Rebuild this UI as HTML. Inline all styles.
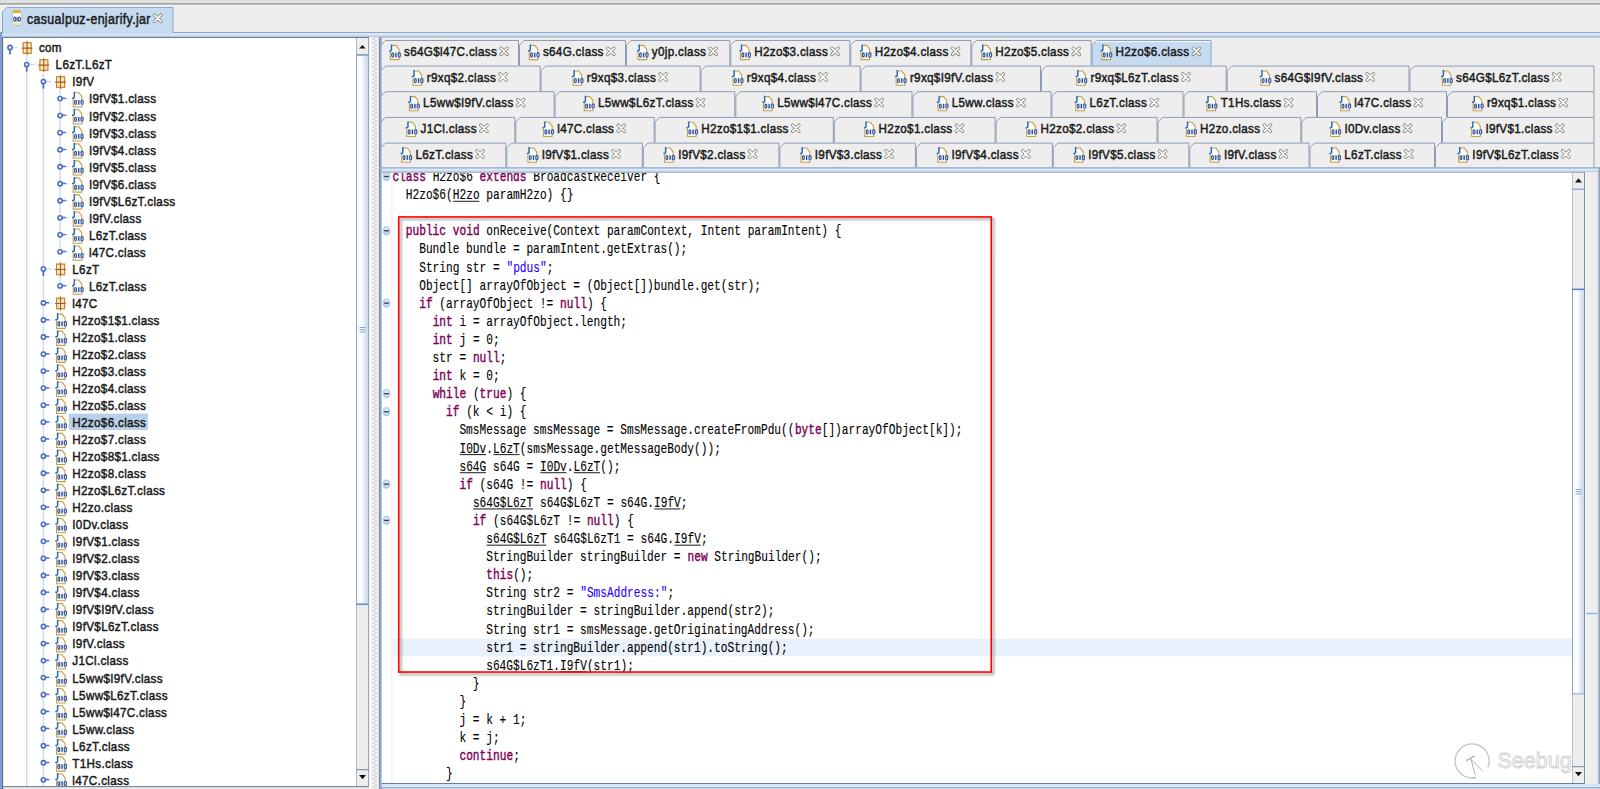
<!DOCTYPE html>
<html><head><meta charset="utf-8"><style>
html,body{margin:0;padding:0;width:1600px;height:789px;overflow:hidden;background:#eeeeee;}
svg{display:block;}

</style></head><body>
<svg width="1600" height="789" viewBox="0 0 1600 789" shape-rendering="geometricPrecision">
<rect x="0" y="0" width="1600" height="789" fill="#eeeeee"/>
<rect x="0" y="0" width="1600" height="1" fill="#dadada"/>
<rect x="0" y="1" width="1600" height="1.8" fill="#e6e6e6"/>
<rect x="0" y="2.8" width="1600" height="2" fill="#aaaaaa"/>
<rect x="0" y="5.1" width="1600" height="1" fill="#f3f3f3"/>
<rect x="0" y="32" width="1600" height="1.2" fill="#8ba5d2"/>
<defs><linearGradient id="bandg" x1="0" x2="0" y1="0" y2="1"><stop offset="0" stop-color="#e6ecf6"/><stop offset="0.55" stop-color="#d0e2f6"/><stop offset="1" stop-color="#b0c0d2"/></linearGradient></defs>
<rect x="0" y="33" width="1600" height="4" fill="url(#bandg)"/>
<path d="M2.5,33 V12 L7,7.5 H173 V33 Z" fill="#c6daf0" stroke="#8ba5d2" stroke-width="1"/>
<rect x="3" y="31" width="170" height="3" fill="#c6daf0"/>
<rect x="12.2" y="12.6" width="9.6" height="13" rx="2.2" fill="#f6f8fc" stroke="#9fb4d4" stroke-width="0.8"/>
<rect x="12.8" y="22.4" width="8.4" height="2.6" fill="#f1e4b4"/>
<rect x="12.6" y="10.1" width="8.2" height="2.8" rx="1" fill="#e2b436"/>
<ellipse cx="14.8" cy="19.2" rx="1.1" ry="2.2" fill="none" stroke="#2f4a80" stroke-width="1.1"/>
<rect x="16.5" y="17" width="1" height="4.4" fill="#2f4a80"/>
<ellipse cx="19.3" cy="19.2" rx="1.1" ry="2.2" fill="none" stroke="#2f4a80" stroke-width="1.1"/>
<text transform="translate(27,23.6) scale(0.86,1)" font-family="Liberation Sans" font-size="14.4" fill="#1a1a1a" stroke="#1a1a1a" stroke-width="0.5" letter-spacing="0.42">casualpuz-enjarify.jar</text>
<path d="M154.6,15.1 L160.9,21.4 M160.9,15.1 L154.6,21.4" stroke="#858578" stroke-width="3.3" stroke-linecap="round"/><path d="M154.6,15.1 L160.9,21.4 M160.9,15.1 L154.6,21.4" stroke="#ffffff" stroke-width="1.7" stroke-linecap="round"/>
<rect x="0" y="32" width="2" height="757" fill="#7f9fd2"/>
<rect x="2" y="37" width="1.3" height="752" fill="#5f6f80"/>
<rect x="3.3" y="37" width="365.7" height="1.3" fill="#6f7f90"/>
<rect x="3.3" y="38" width="352.7" height="748" fill="#ffffff"/>
<rect x="3.3" y="786" width="365.7" height="1.2" fill="#7a8898"/>
<g clip-path="url(#treeclip)">
<rect x="25.95" y="55.7" width="1.5" height="733.3" fill="#cfdcef"/>
<rect x="42.65" y="72.73" width="1.5" height="716.27" fill="#cfdcef"/>
<rect x="59.349999999999994" y="89.76" width="1.5" height="161.8" fill="#cfdcef"/>
<rect x="59.349999999999994" y="277.09000000000003" width="1.5" height="8.529999999999973" fill="#cfdcef"/>
<rect x="12.5" y="46.75" width="5.5" height="1.5" fill="#cfdcef"/>
<circle cx="10.0" cy="47.5" r="2.1" fill="#ffffff" stroke="#4a6cc4" stroke-width="1.6"/>
<rect x="9.15" y="49.5" width="1.7" height="5" fill="#4a6cc4"/>
<rect x="23.200000000000003" y="42.7" width="8" height="10.6" fill="#f3dca4" stroke="#d0822a" stroke-width="1.2"/><rect x="24.200000000000003" y="43.7" width="2.6" height="3.6" fill="#f8ecc4"/><rect x="27.6" y="43.7" width="2.6" height="3.6" fill="#f8ecc4"/><rect x="24.200000000000003" y="48.7" width="2.6" height="3.6" fill="#f8ecc4"/><rect x="27.6" y="48.7" width="2.6" height="3.6" fill="#f8ecc4"/><path d="M27.1,41.1 V55.0 M21.700000000000003,48.1 H32.5" stroke="#a85a26" stroke-width="1.1"/>
<text transform="translate(38.90,52.40) scale(0.86,1)" font-family="Liberation Sans" font-size="13.6" fill="#1a1a1a" stroke="#1a1a1a" stroke-width="0.5" letter-spacing="0.36">com</text>
<rect x="29.2" y="63.78" width="5.5" height="1.5" fill="#cfdcef"/>
<circle cx="26.7" cy="64.53" r="2.1" fill="#ffffff" stroke="#4a6cc4" stroke-width="1.6"/>
<rect x="25.849999999999998" y="66.53" width="1.7" height="5" fill="#4a6cc4"/>
<rect x="39.9" y="59.730000000000004" width="8" height="10.6" fill="#f3dca4" stroke="#d0822a" stroke-width="1.2"/><rect x="40.9" y="60.730000000000004" width="2.6" height="3.6" fill="#f8ecc4"/><rect x="44.3" y="60.730000000000004" width="2.6" height="3.6" fill="#f8ecc4"/><rect x="40.9" y="65.73" width="2.6" height="3.6" fill="#f8ecc4"/><rect x="44.3" y="65.73" width="2.6" height="3.6" fill="#f8ecc4"/><path d="M43.8,58.13 V72.03 M38.4,65.13 H49.199999999999996" stroke="#a85a26" stroke-width="1.1"/>
<text transform="translate(55.60,69.43) scale(0.86,1)" font-family="Liberation Sans" font-size="13.6" fill="#1a1a1a" stroke="#1a1a1a" stroke-width="0.5" letter-spacing="0.36">L6zT.L6zT</text>
<rect x="45.9" y="80.81" width="5.5" height="1.5" fill="#cfdcef"/>
<circle cx="43.4" cy="81.56" r="2.1" fill="#ffffff" stroke="#4a6cc4" stroke-width="1.6"/>
<rect x="42.55" y="83.56" width="1.7" height="5" fill="#4a6cc4"/>
<rect x="56.6" y="76.76" width="8" height="10.6" fill="#f3dca4" stroke="#d0822a" stroke-width="1.2"/><rect x="57.6" y="77.76" width="2.6" height="3.6" fill="#f8ecc4"/><rect x="61.0" y="77.76" width="2.6" height="3.6" fill="#f8ecc4"/><rect x="57.6" y="82.76" width="2.6" height="3.6" fill="#f8ecc4"/><rect x="61.0" y="82.76" width="2.6" height="3.6" fill="#f8ecc4"/><path d="M60.5,75.16000000000001 V89.06000000000002 M55.1,82.16000000000001 H65.9" stroke="#a85a26" stroke-width="1.1"/>
<text transform="translate(72.30,86.46) scale(0.86,1)" font-family="Liberation Sans" font-size="13.6" fill="#1a1a1a" stroke="#1a1a1a" stroke-width="0.5" letter-spacing="0.36">I9fV</text>
<rect x="62.599999999999994" y="97.84" width="5.5" height="1.5" fill="#cfdcef"/>
<circle cx="60.099999999999994" cy="98.59" r="2.1" fill="#ffffff" stroke="#4a6cc4" stroke-width="1.6"/>
<rect x="62.3" y="97.59" width="3.4" height="1.4" fill="#4a6cc4"/>
<path d="M74.39999999999999,92.74000000000001 H78.79999999999998 L81.79999999999998,96.54 V106.94000000000001 H73.19999999999999 V99.14000000000001" fill="#fbfbf8" stroke="#c4a048" stroke-width="1.1"/><rect x="73.99999999999999" y="99.54" width="9.4" height="5.8" fill="#e3e9f4"/><ellipse cx="75.49999999999999" cy="102.34" rx="0.95" ry="2.1" fill="none" stroke="#2f4f90" stroke-width="1.1"/><rect x="78.1" y="100.04" width="1.3" height="4.6" fill="#2f4f90"/><ellipse cx="82.1" cy="102.34" rx="1.1" ry="2.3" fill="none" stroke="#3a5a9a" stroke-width="1.2"/><path d="M74.29999999999998,91.84 V97.04 Q74.29999999999998,98.34 71.99999999999999,98.34" fill="none" stroke="#2a6cb4" stroke-width="1.5"/>
<text transform="translate(89.00,103.49) scale(0.86,1)" font-family="Liberation Sans" font-size="13.6" fill="#1a1a1a" stroke="#1a1a1a" stroke-width="0.5" letter-spacing="0.36">I9fV$1.class</text>
<rect x="62.599999999999994" y="114.87" width="5.5" height="1.5" fill="#cfdcef"/>
<circle cx="60.099999999999994" cy="115.62" r="2.1" fill="#ffffff" stroke="#4a6cc4" stroke-width="1.6"/>
<rect x="62.3" y="114.62" width="3.4" height="1.4" fill="#4a6cc4"/>
<path d="M74.39999999999999,109.77000000000001 H78.79999999999998 L81.79999999999998,113.57000000000001 V123.97000000000001 H73.19999999999999 V116.17000000000002" fill="#fbfbf8" stroke="#c4a048" stroke-width="1.1"/><rect x="73.99999999999999" y="116.57000000000001" width="9.4" height="5.8" fill="#e3e9f4"/><ellipse cx="75.49999999999999" cy="119.37" rx="0.95" ry="2.1" fill="none" stroke="#2f4f90" stroke-width="1.1"/><rect x="78.1" y="117.07000000000001" width="1.3" height="4.6" fill="#2f4f90"/><ellipse cx="82.1" cy="119.37" rx="1.1" ry="2.3" fill="none" stroke="#3a5a9a" stroke-width="1.2"/><path d="M74.29999999999998,108.87 V114.07000000000001 Q74.29999999999998,115.37 71.99999999999999,115.37" fill="none" stroke="#2a6cb4" stroke-width="1.5"/>
<text transform="translate(89.00,120.52) scale(0.86,1)" font-family="Liberation Sans" font-size="13.6" fill="#1a1a1a" stroke="#1a1a1a" stroke-width="0.5" letter-spacing="0.36">I9fV$2.class</text>
<rect x="62.599999999999994" y="131.90000000000003" width="5.5" height="1.5" fill="#cfdcef"/>
<circle cx="60.099999999999994" cy="132.65000000000003" r="2.1" fill="#ffffff" stroke="#4a6cc4" stroke-width="1.6"/>
<rect x="62.3" y="131.65000000000003" width="3.4" height="1.4" fill="#4a6cc4"/>
<path d="M74.39999999999999,126.80000000000003 H78.79999999999998 L81.79999999999998,130.60000000000002 V141.00000000000003 H73.19999999999999 V133.20000000000002" fill="#fbfbf8" stroke="#c4a048" stroke-width="1.1"/><rect x="73.99999999999999" y="133.60000000000002" width="9.4" height="5.8" fill="#e3e9f4"/><ellipse cx="75.49999999999999" cy="136.40000000000003" rx="0.95" ry="2.1" fill="none" stroke="#2f4f90" stroke-width="1.1"/><rect x="78.1" y="134.10000000000002" width="1.3" height="4.6" fill="#2f4f90"/><ellipse cx="82.1" cy="136.40000000000003" rx="1.1" ry="2.3" fill="none" stroke="#3a5a9a" stroke-width="1.2"/><path d="M74.29999999999998,125.90000000000002 V131.10000000000002 Q74.29999999999998,132.40000000000003 71.99999999999999,132.40000000000003" fill="none" stroke="#2a6cb4" stroke-width="1.5"/>
<text transform="translate(89.00,137.55) scale(0.86,1)" font-family="Liberation Sans" font-size="13.6" fill="#1a1a1a" stroke="#1a1a1a" stroke-width="0.5" letter-spacing="0.36">I9fV$3.class</text>
<rect x="62.599999999999994" y="148.93" width="5.5" height="1.5" fill="#cfdcef"/>
<circle cx="60.099999999999994" cy="149.68" r="2.1" fill="#ffffff" stroke="#4a6cc4" stroke-width="1.6"/>
<rect x="62.3" y="148.68" width="3.4" height="1.4" fill="#4a6cc4"/>
<path d="M74.39999999999999,143.83 H78.79999999999998 L81.79999999999998,147.63000000000002 V158.03 H73.19999999999999 V150.23000000000002" fill="#fbfbf8" stroke="#c4a048" stroke-width="1.1"/><rect x="73.99999999999999" y="150.63000000000002" width="9.4" height="5.8" fill="#e3e9f4"/><ellipse cx="75.49999999999999" cy="153.43" rx="0.95" ry="2.1" fill="none" stroke="#2f4f90" stroke-width="1.1"/><rect x="78.1" y="151.13000000000002" width="1.3" height="4.6" fill="#2f4f90"/><ellipse cx="82.1" cy="153.43" rx="1.1" ry="2.3" fill="none" stroke="#3a5a9a" stroke-width="1.2"/><path d="M74.29999999999998,142.93 V148.13000000000002 Q74.29999999999998,149.43 71.99999999999999,149.43" fill="none" stroke="#2a6cb4" stroke-width="1.5"/>
<text transform="translate(89.00,154.58) scale(0.86,1)" font-family="Liberation Sans" font-size="13.6" fill="#1a1a1a" stroke="#1a1a1a" stroke-width="0.5" letter-spacing="0.36">I9fV$4.class</text>
<rect x="62.599999999999994" y="165.96000000000004" width="5.5" height="1.5" fill="#cfdcef"/>
<circle cx="60.099999999999994" cy="166.71000000000004" r="2.1" fill="#ffffff" stroke="#4a6cc4" stroke-width="1.6"/>
<rect x="62.3" y="165.71000000000004" width="3.4" height="1.4" fill="#4a6cc4"/>
<path d="M74.39999999999999,160.86000000000004 H78.79999999999998 L81.79999999999998,164.66000000000005 V175.06000000000003 H73.19999999999999 V167.26000000000005" fill="#fbfbf8" stroke="#c4a048" stroke-width="1.1"/><rect x="73.99999999999999" y="167.66000000000005" width="9.4" height="5.8" fill="#e3e9f4"/><ellipse cx="75.49999999999999" cy="170.46000000000004" rx="0.95" ry="2.1" fill="none" stroke="#2f4f90" stroke-width="1.1"/><rect x="78.1" y="168.16000000000005" width="1.3" height="4.6" fill="#2f4f90"/><ellipse cx="82.1" cy="170.46000000000004" rx="1.1" ry="2.3" fill="none" stroke="#3a5a9a" stroke-width="1.2"/><path d="M74.29999999999998,159.96000000000004 V165.16000000000005 Q74.29999999999998,166.46000000000004 71.99999999999999,166.46000000000004" fill="none" stroke="#2a6cb4" stroke-width="1.5"/>
<text transform="translate(89.00,171.61) scale(0.86,1)" font-family="Liberation Sans" font-size="13.6" fill="#1a1a1a" stroke="#1a1a1a" stroke-width="0.5" letter-spacing="0.36">I9fV$5.class</text>
<rect x="62.599999999999994" y="182.99" width="5.5" height="1.5" fill="#cfdcef"/>
<circle cx="60.099999999999994" cy="183.74" r="2.1" fill="#ffffff" stroke="#4a6cc4" stroke-width="1.6"/>
<rect x="62.3" y="182.74" width="3.4" height="1.4" fill="#4a6cc4"/>
<path d="M74.39999999999999,177.89000000000001 H78.79999999999998 L81.79999999999998,181.69000000000003 V192.09 H73.19999999999999 V184.29000000000002" fill="#fbfbf8" stroke="#c4a048" stroke-width="1.1"/><rect x="73.99999999999999" y="184.69000000000003" width="9.4" height="5.8" fill="#e3e9f4"/><ellipse cx="75.49999999999999" cy="187.49" rx="0.95" ry="2.1" fill="none" stroke="#2f4f90" stroke-width="1.1"/><rect x="78.1" y="185.19000000000003" width="1.3" height="4.6" fill="#2f4f90"/><ellipse cx="82.1" cy="187.49" rx="1.1" ry="2.3" fill="none" stroke="#3a5a9a" stroke-width="1.2"/><path d="M74.29999999999998,176.99 V182.19000000000003 Q74.29999999999998,183.49 71.99999999999999,183.49" fill="none" stroke="#2a6cb4" stroke-width="1.5"/>
<text transform="translate(89.00,188.64) scale(0.86,1)" font-family="Liberation Sans" font-size="13.6" fill="#1a1a1a" stroke="#1a1a1a" stroke-width="0.5" letter-spacing="0.36">I9fV$6.class</text>
<rect x="62.599999999999994" y="200.02000000000004" width="5.5" height="1.5" fill="#cfdcef"/>
<circle cx="60.099999999999994" cy="200.77000000000004" r="2.1" fill="#ffffff" stroke="#4a6cc4" stroke-width="1.6"/>
<rect x="62.3" y="199.77000000000004" width="3.4" height="1.4" fill="#4a6cc4"/>
<path d="M74.39999999999999,194.92000000000004 H78.79999999999998 L81.79999999999998,198.72000000000006 V209.12000000000003 H73.19999999999999 V201.32000000000005" fill="#fbfbf8" stroke="#c4a048" stroke-width="1.1"/><rect x="73.99999999999999" y="201.72000000000006" width="9.4" height="5.8" fill="#e3e9f4"/><ellipse cx="75.49999999999999" cy="204.52000000000004" rx="0.95" ry="2.1" fill="none" stroke="#2f4f90" stroke-width="1.1"/><rect x="78.1" y="202.22000000000006" width="1.3" height="4.6" fill="#2f4f90"/><ellipse cx="82.1" cy="204.52000000000004" rx="1.1" ry="2.3" fill="none" stroke="#3a5a9a" stroke-width="1.2"/><path d="M74.29999999999998,194.02000000000004 V199.22000000000006 Q74.29999999999998,200.52000000000004 71.99999999999999,200.52000000000004" fill="none" stroke="#2a6cb4" stroke-width="1.5"/>
<text transform="translate(89.00,205.67) scale(0.86,1)" font-family="Liberation Sans" font-size="13.6" fill="#1a1a1a" stroke="#1a1a1a" stroke-width="0.5" letter-spacing="0.36">I9fV$L6zT.class</text>
<rect x="62.599999999999994" y="217.05" width="5.5" height="1.5" fill="#cfdcef"/>
<circle cx="60.099999999999994" cy="217.8" r="2.1" fill="#ffffff" stroke="#4a6cc4" stroke-width="1.6"/>
<rect x="62.3" y="216.8" width="3.4" height="1.4" fill="#4a6cc4"/>
<path d="M74.39999999999999,211.95000000000002 H78.79999999999998 L81.79999999999998,215.75000000000003 V226.15 H73.19999999999999 V218.35000000000002" fill="#fbfbf8" stroke="#c4a048" stroke-width="1.1"/><rect x="73.99999999999999" y="218.75000000000003" width="9.4" height="5.8" fill="#e3e9f4"/><ellipse cx="75.49999999999999" cy="221.55" rx="0.95" ry="2.1" fill="none" stroke="#2f4f90" stroke-width="1.1"/><rect x="78.1" y="219.25000000000003" width="1.3" height="4.6" fill="#2f4f90"/><ellipse cx="82.1" cy="221.55" rx="1.1" ry="2.3" fill="none" stroke="#3a5a9a" stroke-width="1.2"/><path d="M74.29999999999998,211.05 V216.25000000000003 Q74.29999999999998,217.55 71.99999999999999,217.55" fill="none" stroke="#2a6cb4" stroke-width="1.5"/>
<text transform="translate(89.00,222.70) scale(0.86,1)" font-family="Liberation Sans" font-size="13.6" fill="#1a1a1a" stroke="#1a1a1a" stroke-width="0.5" letter-spacing="0.36">I9fV.class</text>
<rect x="62.599999999999994" y="234.08000000000004" width="5.5" height="1.5" fill="#cfdcef"/>
<circle cx="60.099999999999994" cy="234.83000000000004" r="2.1" fill="#ffffff" stroke="#4a6cc4" stroke-width="1.6"/>
<rect x="62.3" y="233.83000000000004" width="3.4" height="1.4" fill="#4a6cc4"/>
<path d="M74.39999999999999,228.98000000000005 H78.79999999999998 L81.79999999999998,232.78000000000006 V243.18000000000004 H73.19999999999999 V235.38000000000005" fill="#fbfbf8" stroke="#c4a048" stroke-width="1.1"/><rect x="73.99999999999999" y="235.78000000000006" width="9.4" height="5.8" fill="#e3e9f4"/><ellipse cx="75.49999999999999" cy="238.58000000000004" rx="0.95" ry="2.1" fill="none" stroke="#2f4f90" stroke-width="1.1"/><rect x="78.1" y="236.28000000000006" width="1.3" height="4.6" fill="#2f4f90"/><ellipse cx="82.1" cy="238.58000000000004" rx="1.1" ry="2.3" fill="none" stroke="#3a5a9a" stroke-width="1.2"/><path d="M74.29999999999998,228.08000000000004 V233.28000000000006 Q74.29999999999998,234.58000000000004 71.99999999999999,234.58000000000004" fill="none" stroke="#2a6cb4" stroke-width="1.5"/>
<text transform="translate(89.00,239.73) scale(0.86,1)" font-family="Liberation Sans" font-size="13.6" fill="#1a1a1a" stroke="#1a1a1a" stroke-width="0.5" letter-spacing="0.36">L6zT.class</text>
<rect x="62.599999999999994" y="251.11" width="5.5" height="1.5" fill="#cfdcef"/>
<circle cx="60.099999999999994" cy="251.86" r="2.1" fill="#ffffff" stroke="#4a6cc4" stroke-width="1.6"/>
<rect x="62.3" y="250.86" width="3.4" height="1.4" fill="#4a6cc4"/>
<path d="M74.39999999999999,246.01000000000002 H78.79999999999998 L81.79999999999998,249.81000000000003 V260.21000000000004 H73.19999999999999 V252.41000000000003" fill="#fbfbf8" stroke="#c4a048" stroke-width="1.1"/><rect x="73.99999999999999" y="252.81000000000003" width="9.4" height="5.8" fill="#e3e9f4"/><ellipse cx="75.49999999999999" cy="255.61" rx="0.95" ry="2.1" fill="none" stroke="#2f4f90" stroke-width="1.1"/><rect x="78.1" y="253.31000000000003" width="1.3" height="4.6" fill="#2f4f90"/><ellipse cx="82.1" cy="255.61" rx="1.1" ry="2.3" fill="none" stroke="#3a5a9a" stroke-width="1.2"/><path d="M74.29999999999998,245.11 V250.31000000000003 Q74.29999999999998,251.61 71.99999999999999,251.61" fill="none" stroke="#2a6cb4" stroke-width="1.5"/>
<text transform="translate(89.00,256.76) scale(0.86,1)" font-family="Liberation Sans" font-size="13.6" fill="#1a1a1a" stroke="#1a1a1a" stroke-width="0.5" letter-spacing="0.36">l47C.class</text>
<rect x="45.9" y="268.14000000000004" width="5.5" height="1.5" fill="#cfdcef"/>
<circle cx="43.4" cy="268.89000000000004" r="2.1" fill="#ffffff" stroke="#4a6cc4" stroke-width="1.6"/>
<rect x="42.55" y="270.89000000000004" width="1.7" height="5" fill="#4a6cc4"/>
<rect x="56.6" y="264.09000000000003" width="8" height="10.6" fill="#f3dca4" stroke="#d0822a" stroke-width="1.2"/><rect x="57.6" y="265.09000000000003" width="2.6" height="3.6" fill="#f8ecc4"/><rect x="61.0" y="265.09000000000003" width="2.6" height="3.6" fill="#f8ecc4"/><rect x="57.6" y="270.09000000000003" width="2.6" height="3.6" fill="#f8ecc4"/><rect x="61.0" y="270.09000000000003" width="2.6" height="3.6" fill="#f8ecc4"/><path d="M60.5,262.49 V276.39 M55.1,269.49 H65.9" stroke="#a85a26" stroke-width="1.1"/>
<text transform="translate(72.30,273.79) scale(0.86,1)" font-family="Liberation Sans" font-size="13.6" fill="#1a1a1a" stroke="#1a1a1a" stroke-width="0.5" letter-spacing="0.36">L6zT</text>
<rect x="62.599999999999994" y="285.17" width="5.5" height="1.5" fill="#cfdcef"/>
<circle cx="60.099999999999994" cy="285.92" r="2.1" fill="#ffffff" stroke="#4a6cc4" stroke-width="1.6"/>
<rect x="62.3" y="284.92" width="3.4" height="1.4" fill="#4a6cc4"/>
<path d="M74.39999999999999,280.07 H78.79999999999998 L81.79999999999998,283.87 V294.27 H73.19999999999999 V286.46999999999997" fill="#fbfbf8" stroke="#c4a048" stroke-width="1.1"/><rect x="73.99999999999999" y="286.87" width="9.4" height="5.8" fill="#e3e9f4"/><ellipse cx="75.49999999999999" cy="289.67" rx="0.95" ry="2.1" fill="none" stroke="#2f4f90" stroke-width="1.1"/><rect x="78.1" y="287.37" width="1.3" height="4.6" fill="#2f4f90"/><ellipse cx="82.1" cy="289.67" rx="1.1" ry="2.3" fill="none" stroke="#3a5a9a" stroke-width="1.2"/><path d="M74.29999999999998,279.17 V284.37 Q74.29999999999998,285.67 71.99999999999999,285.67" fill="none" stroke="#2a6cb4" stroke-width="1.5"/>
<text transform="translate(89.00,290.82) scale(0.86,1)" font-family="Liberation Sans" font-size="13.6" fill="#1a1a1a" stroke="#1a1a1a" stroke-width="0.5" letter-spacing="0.36">L6zT.class</text>
<rect x="45.9" y="302.20000000000005" width="5.5" height="1.5" fill="#cfdcef"/>
<circle cx="43.4" cy="302.95000000000005" r="2.1" fill="#ffffff" stroke="#4a6cc4" stroke-width="1.6"/>
<rect x="45.6" y="301.95000000000005" width="3.4" height="1.4" fill="#4a6cc4"/>
<rect x="56.6" y="298.15000000000003" width="8" height="10.6" fill="#f3dca4" stroke="#d0822a" stroke-width="1.2"/><rect x="57.6" y="299.15000000000003" width="2.6" height="3.6" fill="#f8ecc4"/><rect x="61.0" y="299.15000000000003" width="2.6" height="3.6" fill="#f8ecc4"/><rect x="57.6" y="304.15000000000003" width="2.6" height="3.6" fill="#f8ecc4"/><rect x="61.0" y="304.15000000000003" width="2.6" height="3.6" fill="#f8ecc4"/><path d="M60.5,296.55 V310.45 M55.1,303.55 H65.9" stroke="#a85a26" stroke-width="1.1"/>
<text transform="translate(72.30,307.85) scale(0.86,1)" font-family="Liberation Sans" font-size="13.6" fill="#1a1a1a" stroke="#1a1a1a" stroke-width="0.5" letter-spacing="0.36">l47C</text>
<rect x="45.9" y="319.23" width="5.5" height="1.5" fill="#cfdcef"/>
<circle cx="43.4" cy="319.98" r="2.1" fill="#ffffff" stroke="#4a6cc4" stroke-width="1.6"/>
<rect x="45.6" y="318.98" width="3.4" height="1.4" fill="#4a6cc4"/>
<path d="M57.7,314.13 H62.1 L65.1,317.93 V328.33 H56.5 V320.53" fill="#fbfbf8" stroke="#c4a048" stroke-width="1.1"/><rect x="57.3" y="320.93" width="9.4" height="5.8" fill="#e3e9f4"/><ellipse cx="58.8" cy="323.73" rx="0.95" ry="2.1" fill="none" stroke="#2f4f90" stroke-width="1.1"/><rect x="61.4" y="321.43" width="1.3" height="4.6" fill="#2f4f90"/><ellipse cx="65.4" cy="323.73" rx="1.1" ry="2.3" fill="none" stroke="#3a5a9a" stroke-width="1.2"/><path d="M57.6,313.23 V318.43 Q57.6,319.73 55.3,319.73" fill="none" stroke="#2a6cb4" stroke-width="1.5"/>
<text transform="translate(72.30,324.88) scale(0.86,1)" font-family="Liberation Sans" font-size="13.6" fill="#1a1a1a" stroke="#1a1a1a" stroke-width="0.5" letter-spacing="0.36">H2zo$1$1.class</text>
<rect x="45.9" y="336.26" width="5.5" height="1.5" fill="#cfdcef"/>
<circle cx="43.4" cy="337.01" r="2.1" fill="#ffffff" stroke="#4a6cc4" stroke-width="1.6"/>
<rect x="45.6" y="336.01" width="3.4" height="1.4" fill="#4a6cc4"/>
<path d="M57.7,331.15999999999997 H62.1 L65.1,334.96 V345.35999999999996 H56.5 V337.55999999999995" fill="#fbfbf8" stroke="#c4a048" stroke-width="1.1"/><rect x="57.3" y="337.96" width="9.4" height="5.8" fill="#e3e9f4"/><ellipse cx="58.8" cy="340.76" rx="0.95" ry="2.1" fill="none" stroke="#2f4f90" stroke-width="1.1"/><rect x="61.4" y="338.46" width="1.3" height="4.6" fill="#2f4f90"/><ellipse cx="65.4" cy="340.76" rx="1.1" ry="2.3" fill="none" stroke="#3a5a9a" stroke-width="1.2"/><path d="M57.6,330.26 V335.46 Q57.6,336.76 55.3,336.76" fill="none" stroke="#2a6cb4" stroke-width="1.5"/>
<text transform="translate(72.30,341.91) scale(0.86,1)" font-family="Liberation Sans" font-size="13.6" fill="#1a1a1a" stroke="#1a1a1a" stroke-width="0.5" letter-spacing="0.36">H2zo$1.class</text>
<rect x="45.9" y="353.29" width="5.5" height="1.5" fill="#cfdcef"/>
<circle cx="43.4" cy="354.04" r="2.1" fill="#ffffff" stroke="#4a6cc4" stroke-width="1.6"/>
<rect x="45.6" y="353.04" width="3.4" height="1.4" fill="#4a6cc4"/>
<path d="M57.7,348.19 H62.1 L65.1,351.99 V362.39 H56.5 V354.59" fill="#fbfbf8" stroke="#c4a048" stroke-width="1.1"/><rect x="57.3" y="354.99" width="9.4" height="5.8" fill="#e3e9f4"/><ellipse cx="58.8" cy="357.79" rx="0.95" ry="2.1" fill="none" stroke="#2f4f90" stroke-width="1.1"/><rect x="61.4" y="355.49" width="1.3" height="4.6" fill="#2f4f90"/><ellipse cx="65.4" cy="357.79" rx="1.1" ry="2.3" fill="none" stroke="#3a5a9a" stroke-width="1.2"/><path d="M57.6,347.29 V352.49 Q57.6,353.79 55.3,353.79" fill="none" stroke="#2a6cb4" stroke-width="1.5"/>
<text transform="translate(72.30,358.94) scale(0.86,1)" font-family="Liberation Sans" font-size="13.6" fill="#1a1a1a" stroke="#1a1a1a" stroke-width="0.5" letter-spacing="0.36">H2zo$2.class</text>
<rect x="45.9" y="370.32000000000005" width="5.5" height="1.5" fill="#cfdcef"/>
<circle cx="43.4" cy="371.07000000000005" r="2.1" fill="#ffffff" stroke="#4a6cc4" stroke-width="1.6"/>
<rect x="45.6" y="370.07000000000005" width="3.4" height="1.4" fill="#4a6cc4"/>
<path d="M57.7,365.22 H62.1 L65.1,369.02000000000004 V379.42 H56.5 V371.62" fill="#fbfbf8" stroke="#c4a048" stroke-width="1.1"/><rect x="57.3" y="372.02000000000004" width="9.4" height="5.8" fill="#e3e9f4"/><ellipse cx="58.8" cy="374.82000000000005" rx="0.95" ry="2.1" fill="none" stroke="#2f4f90" stroke-width="1.1"/><rect x="61.4" y="372.52000000000004" width="1.3" height="4.6" fill="#2f4f90"/><ellipse cx="65.4" cy="374.82000000000005" rx="1.1" ry="2.3" fill="none" stroke="#3a5a9a" stroke-width="1.2"/><path d="M57.6,364.32000000000005 V369.52000000000004 Q57.6,370.82000000000005 55.3,370.82000000000005" fill="none" stroke="#2a6cb4" stroke-width="1.5"/>
<text transform="translate(72.30,375.97) scale(0.86,1)" font-family="Liberation Sans" font-size="13.6" fill="#1a1a1a" stroke="#1a1a1a" stroke-width="0.5" letter-spacing="0.36">H2zo$3.class</text>
<rect x="45.9" y="387.35" width="5.5" height="1.5" fill="#cfdcef"/>
<circle cx="43.4" cy="388.1" r="2.1" fill="#ffffff" stroke="#4a6cc4" stroke-width="1.6"/>
<rect x="45.6" y="387.1" width="3.4" height="1.4" fill="#4a6cc4"/>
<path d="M57.7,382.25 H62.1 L65.1,386.05 V396.45 H56.5 V388.65" fill="#fbfbf8" stroke="#c4a048" stroke-width="1.1"/><rect x="57.3" y="389.05" width="9.4" height="5.8" fill="#e3e9f4"/><ellipse cx="58.8" cy="391.85" rx="0.95" ry="2.1" fill="none" stroke="#2f4f90" stroke-width="1.1"/><rect x="61.4" y="389.55" width="1.3" height="4.6" fill="#2f4f90"/><ellipse cx="65.4" cy="391.85" rx="1.1" ry="2.3" fill="none" stroke="#3a5a9a" stroke-width="1.2"/><path d="M57.6,381.35 V386.55 Q57.6,387.85 55.3,387.85" fill="none" stroke="#2a6cb4" stroke-width="1.5"/>
<text transform="translate(72.30,393.00) scale(0.86,1)" font-family="Liberation Sans" font-size="13.6" fill="#1a1a1a" stroke="#1a1a1a" stroke-width="0.5" letter-spacing="0.36">H2zo$4.class</text>
<rect x="45.9" y="404.38" width="5.5" height="1.5" fill="#cfdcef"/>
<circle cx="43.4" cy="405.13" r="2.1" fill="#ffffff" stroke="#4a6cc4" stroke-width="1.6"/>
<rect x="45.6" y="404.13" width="3.4" height="1.4" fill="#4a6cc4"/>
<path d="M57.7,399.28 H62.1 L65.1,403.08 V413.47999999999996 H56.5 V405.67999999999995" fill="#fbfbf8" stroke="#c4a048" stroke-width="1.1"/><rect x="57.3" y="406.08" width="9.4" height="5.8" fill="#e3e9f4"/><ellipse cx="58.8" cy="408.88" rx="0.95" ry="2.1" fill="none" stroke="#2f4f90" stroke-width="1.1"/><rect x="61.4" y="406.58" width="1.3" height="4.6" fill="#2f4f90"/><ellipse cx="65.4" cy="408.88" rx="1.1" ry="2.3" fill="none" stroke="#3a5a9a" stroke-width="1.2"/><path d="M57.6,398.38 V403.58 Q57.6,404.88 55.3,404.88" fill="none" stroke="#2a6cb4" stroke-width="1.5"/>
<text transform="translate(72.30,410.03) scale(0.86,1)" font-family="Liberation Sans" font-size="13.6" fill="#1a1a1a" stroke="#1a1a1a" stroke-width="0.5" letter-spacing="0.36">H2zo$5.class</text>
<rect x="68.8" y="413.56" width="79.3" height="16.6" fill="#b9d0e8"/>
<rect x="45.9" y="421.41" width="5.5" height="1.5" fill="#cfdcef"/>
<circle cx="43.4" cy="422.16" r="2.1" fill="#ffffff" stroke="#4a6cc4" stroke-width="1.6"/>
<rect x="45.6" y="421.16" width="3.4" height="1.4" fill="#4a6cc4"/>
<path d="M57.7,416.31 H62.1 L65.1,420.11 V430.51 H56.5 V422.71" fill="#fbfbf8" stroke="#c4a048" stroke-width="1.1"/><rect x="57.3" y="423.11" width="9.4" height="5.8" fill="#e3e9f4"/><ellipse cx="58.8" cy="425.91" rx="0.95" ry="2.1" fill="none" stroke="#2f4f90" stroke-width="1.1"/><rect x="61.4" y="423.61" width="1.3" height="4.6" fill="#2f4f90"/><ellipse cx="65.4" cy="425.91" rx="1.1" ry="2.3" fill="none" stroke="#3a5a9a" stroke-width="1.2"/><path d="M57.6,415.41 V420.61 Q57.6,421.91 55.3,421.91" fill="none" stroke="#2a6cb4" stroke-width="1.5"/>
<text transform="translate(72.30,427.06) scale(0.86,1)" font-family="Liberation Sans" font-size="13.6" fill="#1a1a1a" stroke="#1a1a1a" stroke-width="0.5" letter-spacing="0.36">H2zo$6.class</text>
<rect x="45.9" y="438.44000000000005" width="5.5" height="1.5" fill="#cfdcef"/>
<circle cx="43.4" cy="439.19000000000005" r="2.1" fill="#ffffff" stroke="#4a6cc4" stroke-width="1.6"/>
<rect x="45.6" y="438.19000000000005" width="3.4" height="1.4" fill="#4a6cc4"/>
<path d="M57.7,433.34000000000003 H62.1 L65.1,437.14000000000004 V447.54 H56.5 V439.74" fill="#fbfbf8" stroke="#c4a048" stroke-width="1.1"/><rect x="57.3" y="440.14000000000004" width="9.4" height="5.8" fill="#e3e9f4"/><ellipse cx="58.8" cy="442.94000000000005" rx="0.95" ry="2.1" fill="none" stroke="#2f4f90" stroke-width="1.1"/><rect x="61.4" y="440.64000000000004" width="1.3" height="4.6" fill="#2f4f90"/><ellipse cx="65.4" cy="442.94000000000005" rx="1.1" ry="2.3" fill="none" stroke="#3a5a9a" stroke-width="1.2"/><path d="M57.6,432.44000000000005 V437.64000000000004 Q57.6,438.94000000000005 55.3,438.94000000000005" fill="none" stroke="#2a6cb4" stroke-width="1.5"/>
<text transform="translate(72.30,444.09) scale(0.86,1)" font-family="Liberation Sans" font-size="13.6" fill="#1a1a1a" stroke="#1a1a1a" stroke-width="0.5" letter-spacing="0.36">H2zo$7.class</text>
<rect x="45.9" y="455.47" width="5.5" height="1.5" fill="#cfdcef"/>
<circle cx="43.4" cy="456.22" r="2.1" fill="#ffffff" stroke="#4a6cc4" stroke-width="1.6"/>
<rect x="45.6" y="455.22" width="3.4" height="1.4" fill="#4a6cc4"/>
<path d="M57.7,450.37 H62.1 L65.1,454.17 V464.57 H56.5 V456.77" fill="#fbfbf8" stroke="#c4a048" stroke-width="1.1"/><rect x="57.3" y="457.17" width="9.4" height="5.8" fill="#e3e9f4"/><ellipse cx="58.8" cy="459.97" rx="0.95" ry="2.1" fill="none" stroke="#2f4f90" stroke-width="1.1"/><rect x="61.4" y="457.67" width="1.3" height="4.6" fill="#2f4f90"/><ellipse cx="65.4" cy="459.97" rx="1.1" ry="2.3" fill="none" stroke="#3a5a9a" stroke-width="1.2"/><path d="M57.6,449.47 V454.67 Q57.6,455.97 55.3,455.97" fill="none" stroke="#2a6cb4" stroke-width="1.5"/>
<text transform="translate(72.30,461.12) scale(0.86,1)" font-family="Liberation Sans" font-size="13.6" fill="#1a1a1a" stroke="#1a1a1a" stroke-width="0.5" letter-spacing="0.36">H2zo$8$1.class</text>
<rect x="45.9" y="472.5" width="5.5" height="1.5" fill="#cfdcef"/>
<circle cx="43.4" cy="473.25" r="2.1" fill="#ffffff" stroke="#4a6cc4" stroke-width="1.6"/>
<rect x="45.6" y="472.25" width="3.4" height="1.4" fill="#4a6cc4"/>
<path d="M57.7,467.4 H62.1 L65.1,471.2 V481.59999999999997 H56.5 V473.79999999999995" fill="#fbfbf8" stroke="#c4a048" stroke-width="1.1"/><rect x="57.3" y="474.2" width="9.4" height="5.8" fill="#e3e9f4"/><ellipse cx="58.8" cy="477.0" rx="0.95" ry="2.1" fill="none" stroke="#2f4f90" stroke-width="1.1"/><rect x="61.4" y="474.7" width="1.3" height="4.6" fill="#2f4f90"/><ellipse cx="65.4" cy="477.0" rx="1.1" ry="2.3" fill="none" stroke="#3a5a9a" stroke-width="1.2"/><path d="M57.6,466.5 V471.7 Q57.6,473.0 55.3,473.0" fill="none" stroke="#2a6cb4" stroke-width="1.5"/>
<text transform="translate(72.30,478.15) scale(0.86,1)" font-family="Liberation Sans" font-size="13.6" fill="#1a1a1a" stroke="#1a1a1a" stroke-width="0.5" letter-spacing="0.36">H2zo$8.class</text>
<rect x="45.9" y="489.53000000000003" width="5.5" height="1.5" fill="#cfdcef"/>
<circle cx="43.4" cy="490.28000000000003" r="2.1" fill="#ffffff" stroke="#4a6cc4" stroke-width="1.6"/>
<rect x="45.6" y="489.28000000000003" width="3.4" height="1.4" fill="#4a6cc4"/>
<path d="M57.7,484.43 H62.1 L65.1,488.23 V498.63 H56.5 V490.83" fill="#fbfbf8" stroke="#c4a048" stroke-width="1.1"/><rect x="57.3" y="491.23" width="9.4" height="5.8" fill="#e3e9f4"/><ellipse cx="58.8" cy="494.03000000000003" rx="0.95" ry="2.1" fill="none" stroke="#2f4f90" stroke-width="1.1"/><rect x="61.4" y="491.73" width="1.3" height="4.6" fill="#2f4f90"/><ellipse cx="65.4" cy="494.03000000000003" rx="1.1" ry="2.3" fill="none" stroke="#3a5a9a" stroke-width="1.2"/><path d="M57.6,483.53000000000003 V488.73 Q57.6,490.03000000000003 55.3,490.03000000000003" fill="none" stroke="#2a6cb4" stroke-width="1.5"/>
<text transform="translate(72.30,495.18) scale(0.86,1)" font-family="Liberation Sans" font-size="13.6" fill="#1a1a1a" stroke="#1a1a1a" stroke-width="0.5" letter-spacing="0.36">H2zo$L6zT.class</text>
<rect x="45.9" y="506.56000000000006" width="5.5" height="1.5" fill="#cfdcef"/>
<circle cx="43.4" cy="507.31000000000006" r="2.1" fill="#ffffff" stroke="#4a6cc4" stroke-width="1.6"/>
<rect x="45.6" y="506.31000000000006" width="3.4" height="1.4" fill="#4a6cc4"/>
<path d="M57.7,501.46000000000004 H62.1 L65.1,505.26000000000005 V515.6600000000001 H56.5 V507.86" fill="#fbfbf8" stroke="#c4a048" stroke-width="1.1"/><rect x="57.3" y="508.26000000000005" width="9.4" height="5.8" fill="#e3e9f4"/><ellipse cx="58.8" cy="511.06000000000006" rx="0.95" ry="2.1" fill="none" stroke="#2f4f90" stroke-width="1.1"/><rect x="61.4" y="508.76000000000005" width="1.3" height="4.6" fill="#2f4f90"/><ellipse cx="65.4" cy="511.06000000000006" rx="1.1" ry="2.3" fill="none" stroke="#3a5a9a" stroke-width="1.2"/><path d="M57.6,500.56000000000006 V505.76000000000005 Q57.6,507.06000000000006 55.3,507.06000000000006" fill="none" stroke="#2a6cb4" stroke-width="1.5"/>
<text transform="translate(72.30,512.21) scale(0.86,1)" font-family="Liberation Sans" font-size="13.6" fill="#1a1a1a" stroke="#1a1a1a" stroke-width="0.5" letter-spacing="0.36">H2zo.class</text>
<rect x="45.9" y="523.59" width="5.5" height="1.5" fill="#cfdcef"/>
<circle cx="43.4" cy="524.34" r="2.1" fill="#ffffff" stroke="#4a6cc4" stroke-width="1.6"/>
<rect x="45.6" y="523.34" width="3.4" height="1.4" fill="#4a6cc4"/>
<path d="M57.7,518.49 H62.1 L65.1,522.29 V532.69 H56.5 V524.89" fill="#fbfbf8" stroke="#c4a048" stroke-width="1.1"/><rect x="57.3" y="525.29" width="9.4" height="5.8" fill="#e3e9f4"/><ellipse cx="58.8" cy="528.09" rx="0.95" ry="2.1" fill="none" stroke="#2f4f90" stroke-width="1.1"/><rect x="61.4" y="525.79" width="1.3" height="4.6" fill="#2f4f90"/><ellipse cx="65.4" cy="528.09" rx="1.1" ry="2.3" fill="none" stroke="#3a5a9a" stroke-width="1.2"/><path d="M57.6,517.59 V522.79 Q57.6,524.09 55.3,524.09" fill="none" stroke="#2a6cb4" stroke-width="1.5"/>
<text transform="translate(72.30,529.24) scale(0.86,1)" font-family="Liberation Sans" font-size="13.6" fill="#1a1a1a" stroke="#1a1a1a" stroke-width="0.5" letter-spacing="0.36">I0Dv.class</text>
<rect x="45.9" y="540.62" width="5.5" height="1.5" fill="#cfdcef"/>
<circle cx="43.4" cy="541.37" r="2.1" fill="#ffffff" stroke="#4a6cc4" stroke-width="1.6"/>
<rect x="45.6" y="540.37" width="3.4" height="1.4" fill="#4a6cc4"/>
<path d="M57.7,535.52 H62.1 L65.1,539.3199999999999 V549.72 H56.5 V541.92" fill="#fbfbf8" stroke="#c4a048" stroke-width="1.1"/><rect x="57.3" y="542.3199999999999" width="9.4" height="5.8" fill="#e3e9f4"/><ellipse cx="58.8" cy="545.12" rx="0.95" ry="2.1" fill="none" stroke="#2f4f90" stroke-width="1.1"/><rect x="61.4" y="542.8199999999999" width="1.3" height="4.6" fill="#2f4f90"/><ellipse cx="65.4" cy="545.12" rx="1.1" ry="2.3" fill="none" stroke="#3a5a9a" stroke-width="1.2"/><path d="M57.6,534.62 V539.8199999999999 Q57.6,541.12 55.3,541.12" fill="none" stroke="#2a6cb4" stroke-width="1.5"/>
<text transform="translate(72.30,546.27) scale(0.86,1)" font-family="Liberation Sans" font-size="13.6" fill="#1a1a1a" stroke="#1a1a1a" stroke-width="0.5" letter-spacing="0.36">I9fV$1.class</text>
<rect x="45.9" y="557.65" width="5.5" height="1.5" fill="#cfdcef"/>
<circle cx="43.4" cy="558.4" r="2.1" fill="#ffffff" stroke="#4a6cc4" stroke-width="1.6"/>
<rect x="45.6" y="557.4" width="3.4" height="1.4" fill="#4a6cc4"/>
<path d="M57.7,552.55 H62.1 L65.1,556.3499999999999 V566.75 H56.5 V558.9499999999999" fill="#fbfbf8" stroke="#c4a048" stroke-width="1.1"/><rect x="57.3" y="559.3499999999999" width="9.4" height="5.8" fill="#e3e9f4"/><ellipse cx="58.8" cy="562.15" rx="0.95" ry="2.1" fill="none" stroke="#2f4f90" stroke-width="1.1"/><rect x="61.4" y="559.8499999999999" width="1.3" height="4.6" fill="#2f4f90"/><ellipse cx="65.4" cy="562.15" rx="1.1" ry="2.3" fill="none" stroke="#3a5a9a" stroke-width="1.2"/><path d="M57.6,551.65 V556.8499999999999 Q57.6,558.15 55.3,558.15" fill="none" stroke="#2a6cb4" stroke-width="1.5"/>
<text transform="translate(72.30,563.30) scale(0.86,1)" font-family="Liberation Sans" font-size="13.6" fill="#1a1a1a" stroke="#1a1a1a" stroke-width="0.5" letter-spacing="0.36">I9fV$2.class</text>
<rect x="45.9" y="574.6800000000001" width="5.5" height="1.5" fill="#cfdcef"/>
<circle cx="43.4" cy="575.4300000000001" r="2.1" fill="#ffffff" stroke="#4a6cc4" stroke-width="1.6"/>
<rect x="45.6" y="574.4300000000001" width="3.4" height="1.4" fill="#4a6cc4"/>
<path d="M57.7,569.58 H62.1 L65.1,573.38 V583.7800000000001 H56.5 V575.98" fill="#fbfbf8" stroke="#c4a048" stroke-width="1.1"/><rect x="57.3" y="576.38" width="9.4" height="5.8" fill="#e3e9f4"/><ellipse cx="58.8" cy="579.1800000000001" rx="0.95" ry="2.1" fill="none" stroke="#2f4f90" stroke-width="1.1"/><rect x="61.4" y="576.88" width="1.3" height="4.6" fill="#2f4f90"/><ellipse cx="65.4" cy="579.1800000000001" rx="1.1" ry="2.3" fill="none" stroke="#3a5a9a" stroke-width="1.2"/><path d="M57.6,568.6800000000001 V573.88 Q57.6,575.1800000000001 55.3,575.1800000000001" fill="none" stroke="#2a6cb4" stroke-width="1.5"/>
<text transform="translate(72.30,580.33) scale(0.86,1)" font-family="Liberation Sans" font-size="13.6" fill="#1a1a1a" stroke="#1a1a1a" stroke-width="0.5" letter-spacing="0.36">I9fV$3.class</text>
<rect x="45.9" y="591.71" width="5.5" height="1.5" fill="#cfdcef"/>
<circle cx="43.4" cy="592.46" r="2.1" fill="#ffffff" stroke="#4a6cc4" stroke-width="1.6"/>
<rect x="45.6" y="591.46" width="3.4" height="1.4" fill="#4a6cc4"/>
<path d="M57.7,586.61 H62.1 L65.1,590.41 V600.8100000000001 H56.5 V593.01" fill="#fbfbf8" stroke="#c4a048" stroke-width="1.1"/><rect x="57.3" y="593.41" width="9.4" height="5.8" fill="#e3e9f4"/><ellipse cx="58.8" cy="596.21" rx="0.95" ry="2.1" fill="none" stroke="#2f4f90" stroke-width="1.1"/><rect x="61.4" y="593.91" width="1.3" height="4.6" fill="#2f4f90"/><ellipse cx="65.4" cy="596.21" rx="1.1" ry="2.3" fill="none" stroke="#3a5a9a" stroke-width="1.2"/><path d="M57.6,585.71 V590.91 Q57.6,592.21 55.3,592.21" fill="none" stroke="#2a6cb4" stroke-width="1.5"/>
<text transform="translate(72.30,597.36) scale(0.86,1)" font-family="Liberation Sans" font-size="13.6" fill="#1a1a1a" stroke="#1a1a1a" stroke-width="0.5" letter-spacing="0.36">I9fV$4.class</text>
<rect x="45.9" y="608.74" width="5.5" height="1.5" fill="#cfdcef"/>
<circle cx="43.4" cy="609.49" r="2.1" fill="#ffffff" stroke="#4a6cc4" stroke-width="1.6"/>
<rect x="45.6" y="608.49" width="3.4" height="1.4" fill="#4a6cc4"/>
<path d="M57.7,603.64 H62.1 L65.1,607.4399999999999 V617.84 H56.5 V610.04" fill="#fbfbf8" stroke="#c4a048" stroke-width="1.1"/><rect x="57.3" y="610.4399999999999" width="9.4" height="5.8" fill="#e3e9f4"/><ellipse cx="58.8" cy="613.24" rx="0.95" ry="2.1" fill="none" stroke="#2f4f90" stroke-width="1.1"/><rect x="61.4" y="610.9399999999999" width="1.3" height="4.6" fill="#2f4f90"/><ellipse cx="65.4" cy="613.24" rx="1.1" ry="2.3" fill="none" stroke="#3a5a9a" stroke-width="1.2"/><path d="M57.6,602.74 V607.9399999999999 Q57.6,609.24 55.3,609.24" fill="none" stroke="#2a6cb4" stroke-width="1.5"/>
<text transform="translate(72.30,614.39) scale(0.86,1)" font-family="Liberation Sans" font-size="13.6" fill="#1a1a1a" stroke="#1a1a1a" stroke-width="0.5" letter-spacing="0.36">I9fV$I9fV.class</text>
<rect x="45.9" y="625.77" width="5.5" height="1.5" fill="#cfdcef"/>
<circle cx="43.4" cy="626.52" r="2.1" fill="#ffffff" stroke="#4a6cc4" stroke-width="1.6"/>
<rect x="45.6" y="625.52" width="3.4" height="1.4" fill="#4a6cc4"/>
<path d="M57.7,620.67 H62.1 L65.1,624.4699999999999 V634.87 H56.5 V627.0699999999999" fill="#fbfbf8" stroke="#c4a048" stroke-width="1.1"/><rect x="57.3" y="627.4699999999999" width="9.4" height="5.8" fill="#e3e9f4"/><ellipse cx="58.8" cy="630.27" rx="0.95" ry="2.1" fill="none" stroke="#2f4f90" stroke-width="1.1"/><rect x="61.4" y="627.9699999999999" width="1.3" height="4.6" fill="#2f4f90"/><ellipse cx="65.4" cy="630.27" rx="1.1" ry="2.3" fill="none" stroke="#3a5a9a" stroke-width="1.2"/><path d="M57.6,619.77 V624.9699999999999 Q57.6,626.27 55.3,626.27" fill="none" stroke="#2a6cb4" stroke-width="1.5"/>
<text transform="translate(72.30,631.42) scale(0.86,1)" font-family="Liberation Sans" font-size="13.6" fill="#1a1a1a" stroke="#1a1a1a" stroke-width="0.5" letter-spacing="0.36">I9fV$L6zT.class</text>
<rect x="45.9" y="642.8000000000001" width="5.5" height="1.5" fill="#cfdcef"/>
<circle cx="43.4" cy="643.5500000000001" r="2.1" fill="#ffffff" stroke="#4a6cc4" stroke-width="1.6"/>
<rect x="45.6" y="642.5500000000001" width="3.4" height="1.4" fill="#4a6cc4"/>
<path d="M57.7,637.7 H62.1 L65.1,641.5 V651.9000000000001 H56.5 V644.1" fill="#fbfbf8" stroke="#c4a048" stroke-width="1.1"/><rect x="57.3" y="644.5" width="9.4" height="5.8" fill="#e3e9f4"/><ellipse cx="58.8" cy="647.3000000000001" rx="0.95" ry="2.1" fill="none" stroke="#2f4f90" stroke-width="1.1"/><rect x="61.4" y="645.0" width="1.3" height="4.6" fill="#2f4f90"/><ellipse cx="65.4" cy="647.3000000000001" rx="1.1" ry="2.3" fill="none" stroke="#3a5a9a" stroke-width="1.2"/><path d="M57.6,636.8000000000001 V642.0 Q57.6,643.3000000000001 55.3,643.3000000000001" fill="none" stroke="#2a6cb4" stroke-width="1.5"/>
<text transform="translate(72.30,648.45) scale(0.86,1)" font-family="Liberation Sans" font-size="13.6" fill="#1a1a1a" stroke="#1a1a1a" stroke-width="0.5" letter-spacing="0.36">I9fV.class</text>
<rect x="45.9" y="659.83" width="5.5" height="1.5" fill="#cfdcef"/>
<circle cx="43.4" cy="660.58" r="2.1" fill="#ffffff" stroke="#4a6cc4" stroke-width="1.6"/>
<rect x="45.6" y="659.58" width="3.4" height="1.4" fill="#4a6cc4"/>
<path d="M57.7,654.73 H62.1 L65.1,658.53 V668.9300000000001 H56.5 V661.13" fill="#fbfbf8" stroke="#c4a048" stroke-width="1.1"/><rect x="57.3" y="661.53" width="9.4" height="5.8" fill="#e3e9f4"/><ellipse cx="58.8" cy="664.33" rx="0.95" ry="2.1" fill="none" stroke="#2f4f90" stroke-width="1.1"/><rect x="61.4" y="662.03" width="1.3" height="4.6" fill="#2f4f90"/><ellipse cx="65.4" cy="664.33" rx="1.1" ry="2.3" fill="none" stroke="#3a5a9a" stroke-width="1.2"/><path d="M57.6,653.83 V659.03 Q57.6,660.33 55.3,660.33" fill="none" stroke="#2a6cb4" stroke-width="1.5"/>
<text transform="translate(72.30,665.48) scale(0.86,1)" font-family="Liberation Sans" font-size="13.6" fill="#1a1a1a" stroke="#1a1a1a" stroke-width="0.5" letter-spacing="0.36">J1Cl.class</text>
<rect x="45.9" y="676.86" width="5.5" height="1.5" fill="#cfdcef"/>
<circle cx="43.4" cy="677.61" r="2.1" fill="#ffffff" stroke="#4a6cc4" stroke-width="1.6"/>
<rect x="45.6" y="676.61" width="3.4" height="1.4" fill="#4a6cc4"/>
<path d="M57.7,671.76 H62.1 L65.1,675.56 V685.96 H56.5 V678.16" fill="#fbfbf8" stroke="#c4a048" stroke-width="1.1"/><rect x="57.3" y="678.56" width="9.4" height="5.8" fill="#e3e9f4"/><ellipse cx="58.8" cy="681.36" rx="0.95" ry="2.1" fill="none" stroke="#2f4f90" stroke-width="1.1"/><rect x="61.4" y="679.06" width="1.3" height="4.6" fill="#2f4f90"/><ellipse cx="65.4" cy="681.36" rx="1.1" ry="2.3" fill="none" stroke="#3a5a9a" stroke-width="1.2"/><path d="M57.6,670.86 V676.06 Q57.6,677.36 55.3,677.36" fill="none" stroke="#2a6cb4" stroke-width="1.5"/>
<text transform="translate(72.30,682.51) scale(0.86,1)" font-family="Liberation Sans" font-size="13.6" fill="#1a1a1a" stroke="#1a1a1a" stroke-width="0.5" letter-spacing="0.36">L5ww$I9fV.class</text>
<rect x="45.9" y="693.8900000000001" width="5.5" height="1.5" fill="#cfdcef"/>
<circle cx="43.4" cy="694.6400000000001" r="2.1" fill="#ffffff" stroke="#4a6cc4" stroke-width="1.6"/>
<rect x="45.6" y="693.6400000000001" width="3.4" height="1.4" fill="#4a6cc4"/>
<path d="M57.7,688.7900000000001 H62.1 L65.1,692.59 V702.9900000000001 H56.5 V695.19" fill="#fbfbf8" stroke="#c4a048" stroke-width="1.1"/><rect x="57.3" y="695.59" width="9.4" height="5.8" fill="#e3e9f4"/><ellipse cx="58.8" cy="698.3900000000001" rx="0.95" ry="2.1" fill="none" stroke="#2f4f90" stroke-width="1.1"/><rect x="61.4" y="696.09" width="1.3" height="4.6" fill="#2f4f90"/><ellipse cx="65.4" cy="698.3900000000001" rx="1.1" ry="2.3" fill="none" stroke="#3a5a9a" stroke-width="1.2"/><path d="M57.6,687.8900000000001 V693.09 Q57.6,694.3900000000001 55.3,694.3900000000001" fill="none" stroke="#2a6cb4" stroke-width="1.5"/>
<text transform="translate(72.30,699.54) scale(0.86,1)" font-family="Liberation Sans" font-size="13.6" fill="#1a1a1a" stroke="#1a1a1a" stroke-width="0.5" letter-spacing="0.36">L5ww$L6zT.class</text>
<rect x="45.9" y="710.9200000000001" width="5.5" height="1.5" fill="#cfdcef"/>
<circle cx="43.4" cy="711.6700000000001" r="2.1" fill="#ffffff" stroke="#4a6cc4" stroke-width="1.6"/>
<rect x="45.6" y="710.6700000000001" width="3.4" height="1.4" fill="#4a6cc4"/>
<path d="M57.7,705.82 H62.1 L65.1,709.62 V720.0200000000001 H56.5 V712.22" fill="#fbfbf8" stroke="#c4a048" stroke-width="1.1"/><rect x="57.3" y="712.62" width="9.4" height="5.8" fill="#e3e9f4"/><ellipse cx="58.8" cy="715.4200000000001" rx="0.95" ry="2.1" fill="none" stroke="#2f4f90" stroke-width="1.1"/><rect x="61.4" y="713.12" width="1.3" height="4.6" fill="#2f4f90"/><ellipse cx="65.4" cy="715.4200000000001" rx="1.1" ry="2.3" fill="none" stroke="#3a5a9a" stroke-width="1.2"/><path d="M57.6,704.9200000000001 V710.12 Q57.6,711.4200000000001 55.3,711.4200000000001" fill="none" stroke="#2a6cb4" stroke-width="1.5"/>
<text transform="translate(72.30,716.57) scale(0.86,1)" font-family="Liberation Sans" font-size="13.6" fill="#1a1a1a" stroke="#1a1a1a" stroke-width="0.5" letter-spacing="0.36">L5ww$l47C.class</text>
<rect x="45.9" y="727.95" width="5.5" height="1.5" fill="#cfdcef"/>
<circle cx="43.4" cy="728.7" r="2.1" fill="#ffffff" stroke="#4a6cc4" stroke-width="1.6"/>
<rect x="45.6" y="727.7" width="3.4" height="1.4" fill="#4a6cc4"/>
<path d="M57.7,722.85 H62.1 L65.1,726.65 V737.0500000000001 H56.5 V729.25" fill="#fbfbf8" stroke="#c4a048" stroke-width="1.1"/><rect x="57.3" y="729.65" width="9.4" height="5.8" fill="#e3e9f4"/><ellipse cx="58.8" cy="732.45" rx="0.95" ry="2.1" fill="none" stroke="#2f4f90" stroke-width="1.1"/><rect x="61.4" y="730.15" width="1.3" height="4.6" fill="#2f4f90"/><ellipse cx="65.4" cy="732.45" rx="1.1" ry="2.3" fill="none" stroke="#3a5a9a" stroke-width="1.2"/><path d="M57.6,721.95 V727.15 Q57.6,728.45 55.3,728.45" fill="none" stroke="#2a6cb4" stroke-width="1.5"/>
<text transform="translate(72.30,733.60) scale(0.86,1)" font-family="Liberation Sans" font-size="13.6" fill="#1a1a1a" stroke="#1a1a1a" stroke-width="0.5" letter-spacing="0.36">L5ww.class</text>
<rect x="45.9" y="744.98" width="5.5" height="1.5" fill="#cfdcef"/>
<circle cx="43.4" cy="745.73" r="2.1" fill="#ffffff" stroke="#4a6cc4" stroke-width="1.6"/>
<rect x="45.6" y="744.73" width="3.4" height="1.4" fill="#4a6cc4"/>
<path d="M57.7,739.88 H62.1 L65.1,743.68 V754.08 H56.5 V746.28" fill="#fbfbf8" stroke="#c4a048" stroke-width="1.1"/><rect x="57.3" y="746.68" width="9.4" height="5.8" fill="#e3e9f4"/><ellipse cx="58.8" cy="749.48" rx="0.95" ry="2.1" fill="none" stroke="#2f4f90" stroke-width="1.1"/><rect x="61.4" y="747.18" width="1.3" height="4.6" fill="#2f4f90"/><ellipse cx="65.4" cy="749.48" rx="1.1" ry="2.3" fill="none" stroke="#3a5a9a" stroke-width="1.2"/><path d="M57.6,738.98 V744.18 Q57.6,745.48 55.3,745.48" fill="none" stroke="#2a6cb4" stroke-width="1.5"/>
<text transform="translate(72.30,750.63) scale(0.86,1)" font-family="Liberation Sans" font-size="13.6" fill="#1a1a1a" stroke="#1a1a1a" stroke-width="0.5" letter-spacing="0.36">L6zT.class</text>
<rect x="45.9" y="762.01" width="5.5" height="1.5" fill="#cfdcef"/>
<circle cx="43.4" cy="762.76" r="2.1" fill="#ffffff" stroke="#4a6cc4" stroke-width="1.6"/>
<rect x="45.6" y="761.76" width="3.4" height="1.4" fill="#4a6cc4"/>
<path d="M57.7,756.91 H62.1 L65.1,760.7099999999999 V771.11 H56.5 V763.31" fill="#fbfbf8" stroke="#c4a048" stroke-width="1.1"/><rect x="57.3" y="763.7099999999999" width="9.4" height="5.8" fill="#e3e9f4"/><ellipse cx="58.8" cy="766.51" rx="0.95" ry="2.1" fill="none" stroke="#2f4f90" stroke-width="1.1"/><rect x="61.4" y="764.2099999999999" width="1.3" height="4.6" fill="#2f4f90"/><ellipse cx="65.4" cy="766.51" rx="1.1" ry="2.3" fill="none" stroke="#3a5a9a" stroke-width="1.2"/><path d="M57.6,756.01 V761.2099999999999 Q57.6,762.51 55.3,762.51" fill="none" stroke="#2a6cb4" stroke-width="1.5"/>
<text transform="translate(72.30,767.66) scale(0.86,1)" font-family="Liberation Sans" font-size="13.6" fill="#1a1a1a" stroke="#1a1a1a" stroke-width="0.5" letter-spacing="0.36">T1Hs.class</text>
<rect x="45.9" y="779.0400000000001" width="5.5" height="1.5" fill="#cfdcef"/>
<circle cx="43.4" cy="779.7900000000001" r="2.1" fill="#ffffff" stroke="#4a6cc4" stroke-width="1.6"/>
<rect x="45.6" y="778.7900000000001" width="3.4" height="1.4" fill="#4a6cc4"/>
<path d="M57.7,773.94 H62.1 L65.1,777.74 V788.1400000000001 H56.5 V780.34" fill="#fbfbf8" stroke="#c4a048" stroke-width="1.1"/><rect x="57.3" y="780.74" width="9.4" height="5.8" fill="#e3e9f4"/><ellipse cx="58.8" cy="783.5400000000001" rx="0.95" ry="2.1" fill="none" stroke="#2f4f90" stroke-width="1.1"/><rect x="61.4" y="781.24" width="1.3" height="4.6" fill="#2f4f90"/><ellipse cx="65.4" cy="783.5400000000001" rx="1.1" ry="2.3" fill="none" stroke="#3a5a9a" stroke-width="1.2"/><path d="M57.6,773.0400000000001 V778.24 Q57.6,779.5400000000001 55.3,779.5400000000001" fill="none" stroke="#2a6cb4" stroke-width="1.5"/>
<text transform="translate(72.30,784.69) scale(0.86,1)" font-family="Liberation Sans" font-size="13.6" fill="#1a1a1a" stroke="#1a1a1a" stroke-width="0.5" letter-spacing="0.36">l47C.class</text>
</g>
<rect x="356" y="38" width="13.2" height="748" fill="#eeeeee"/>
<rect x="356" y="38" width="1" height="748" fill="#a9b6c6"/>
<rect x="368.2" y="38" width="1" height="748" fill="#8f9cad"/>
<path d="M359.2,48.4 L362.4,44.9 L365.6,48.4 Z" fill="#111"/>
<rect x="356" y="54" width="13.2" height="1.3" fill="#8aa4d0"/>
<defs><linearGradient id="thumbg" x1="0" x2="1" y1="0" y2="0"><stop offset="0" stop-color="#f4f8fd"/><stop offset="0.35" stop-color="#ffffff"/><stop offset="1" stop-color="#c3d5ea"/></linearGradient></defs>
<rect x="356.5" y="55.3" width="12" height="548.5" fill="url(#thumbg)" stroke="#8aa4d0" stroke-width="1"/>
<path d="M359.5,327.5 H365.5 M359.5,329.7 H365.5 M359.5,331.9 H365.5" stroke="#7f9ad0" stroke-width="0.9"/>
<rect x="368.3" y="38" width="1.1" height="748" fill="#9aa6b4"/>
<rect x="356" y="603.8" width="13.2" height="1.3" fill="#6f8fd0"/>
<rect x="356" y="769" width="13.2" height="1.3" fill="#8f9cad"/>
<path d="M359,775 L362.6,779.3 L366,775 Z" fill="#111"/>
<defs><pattern id="dots" x="371.5" y="0" width="7" height="4" patternUnits="userSpaceOnUse"><rect width="7" height="4" fill="#f1f1f1"/><rect x="1.9" y="2.4" width="1.3" height="1.1" fill="#b0b0b0"/><rect x="3.9" y="0.4" width="1.3" height="1.1" fill="#b0b0b0"/><rect x="1.2" y="3.1" width="0.9" height="0.9" fill="#d0d0d0"/><rect x="3.2" y="1.1" width="0.9" height="0.9" fill="#d0d0d0"/></pattern></defs>
<rect x="369.2" y="37.5" width="1.8" height="752" fill="#ffffff"/>
<rect x="371" y="37.5" width="7" height="752" fill="url(#dots)"/>
<rect x="378" y="37.5" width="0.8" height="752" fill="#ffffff"/>
<rect x="378.8" y="37" width="1.2" height="752" fill="#7888a0"/>
<rect x="380.0" y="37" width="1.8" height="752" fill="#91a9d8"/>
<rect x="378.8" y="36.6" width="1221.2" height="1" fill="#a8b6c6"/>
<g id="tabs">
<path d="M381.0,65.6 V45.0 L385.5,40.5 H518.5 V65.6" fill="#eeeeee" stroke="#8d9db4" stroke-width="1"/>
<path d="M519.5,65.6 V45.0 L524,40.5 H625.5 V65.6" fill="#eeeeee" stroke="#8d9db4" stroke-width="1"/>
<path d="M626.5,65.6 V45.0 L631,40.5 H729.8 V65.6" fill="#eeeeee" stroke="#8d9db4" stroke-width="1"/>
<path d="M730.8,65.6 V45.0 L735.3,40.5 H849.8 V65.6" fill="#eeeeee" stroke="#8d9db4" stroke-width="1"/>
<path d="M850.8,65.6 V45.0 L855.3,40.5 H970.8 V65.6" fill="#eeeeee" stroke="#8d9db4" stroke-width="1"/>
<path d="M971.8,65.6 V45.0 L976.3,40.5 H1091.1 V65.6" fill="#eeeeee" stroke="#8d9db4" stroke-width="1"/>
<path d="M1092.1,65.6 V45.0 L1096.6,40.5 H1211.1 V65.6" fill="#c6daf0" stroke="#8ba5d2" stroke-width="1"/>
<rect x="1095.6" y="41.1" width="115.0" height="1" fill="#ffffff" opacity="0.9"/>
<path d="M381.0,91.2 V70.6 L385.5,66.1 H540.1 V91.2" fill="#eeeeee" stroke="#8d9db4" stroke-width="1"/>
<path d="M541.1,91.2 V70.6 L545.6,66.1 H700.1 V91.2" fill="#eeeeee" stroke="#8d9db4" stroke-width="1"/>
<path d="M701.1,91.2 V70.6 L705.6,66.1 H860.1 V91.2" fill="#eeeeee" stroke="#8d9db4" stroke-width="1"/>
<path d="M861.1,91.2 V70.6 L865.6,66.1 H1040.5 V91.2" fill="#eeeeee" stroke="#8d9db4" stroke-width="1"/>
<path d="M1041.5,91.2 V70.6 L1046,66.1 H1226.2 V91.2" fill="#eeeeee" stroke="#8d9db4" stroke-width="1"/>
<path d="M1227.2,91.2 V70.6 L1231.7,66.1 H1409.0 V91.2" fill="#eeeeee" stroke="#8d9db4" stroke-width="1"/>
<path d="M1410.0,91.2 V70.6 L1414.5,66.1 H1594.0 V91.2" fill="#eeeeee" stroke="#8d9db4" stroke-width="1"/>
<path d="M381.0,116.9 V96.2 L385.5,91.7 H554.1 V116.9" fill="#eeeeee" stroke="#8d9db4" stroke-width="1"/>
<path d="M555.1,116.9 V96.2 L559.6,91.7 H734.8 V116.9" fill="#eeeeee" stroke="#8d9db4" stroke-width="1"/>
<path d="M735.8,116.9 V96.2 L740.3,91.7 H912.0 V116.9" fill="#eeeeee" stroke="#8d9db4" stroke-width="1"/>
<path d="M913.0,116.9 V96.2 L917.5,91.7 H1051.0 V116.9" fill="#eeeeee" stroke="#8d9db4" stroke-width="1"/>
<path d="M1052.0,116.9 V96.2 L1056.5,91.7 H1183.0 V116.9" fill="#eeeeee" stroke="#8d9db4" stroke-width="1"/>
<path d="M1184.0,116.9 V96.2 L1188.5,91.7 H1316.5 V116.9" fill="#eeeeee" stroke="#8d9db4" stroke-width="1"/>
<path d="M1317.5,116.9 V96.2 L1322,91.7 H1446.5 V116.9" fill="#eeeeee" stroke="#8d9db4" stroke-width="1"/>
<path d="M1447.5,116.9 V96.2 L1452,91.7 H1594.0 V116.9" fill="#eeeeee" stroke="#8d9db4" stroke-width="1"/>
<path d="M381.0,142.6 V121.9 L385.5,117.4 H514.8 V142.6" fill="#eeeeee" stroke="#8d9db4" stroke-width="1"/>
<path d="M515.8,142.6 V121.9 L520.3,117.4 H654.1 V142.6" fill="#eeeeee" stroke="#8d9db4" stroke-width="1"/>
<path d="M655.1,142.6 V121.9 L659.6,117.4 H833.3 V142.6" fill="#eeeeee" stroke="#8d9db4" stroke-width="1"/>
<path d="M834.3,142.6 V121.9 L838.8,117.4 H995.1 V142.6" fill="#eeeeee" stroke="#8d9db4" stroke-width="1"/>
<path d="M996.1,142.6 V121.9 L1000.6,117.4 H1157.0 V142.6" fill="#eeeeee" stroke="#8d9db4" stroke-width="1"/>
<path d="M1158.0,142.6 V121.9 L1162.5,117.4 H1300.8 V142.6" fill="#eeeeee" stroke="#8d9db4" stroke-width="1"/>
<path d="M1301.8,142.6 V121.9 L1306.3,117.4 H1441.5 V142.6" fill="#eeeeee" stroke="#8d9db4" stroke-width="1"/>
<path d="M1442.5,142.6 V121.9 L1447,117.4 H1594.0 V142.6" fill="#eeeeee" stroke="#8d9db4" stroke-width="1"/>
<path d="M381.0,167.6 V147.6 L385.5,143.1 H505.8 V167.6" fill="#eeeeee" stroke="#8d9db4" stroke-width="1"/>
<path d="M506.8,167.6 V147.6 L511.3,143.1 H642.3 V167.6" fill="#eeeeee" stroke="#8d9db4" stroke-width="1"/>
<path d="M643.3,167.6 V147.6 L647.8,143.1 H778.9 V167.6" fill="#eeeeee" stroke="#8d9db4" stroke-width="1"/>
<path d="M779.9,167.6 V147.6 L784.4,143.1 H915.4 V167.6" fill="#eeeeee" stroke="#8d9db4" stroke-width="1"/>
<path d="M916.4,167.6 V147.6 L920.9,143.1 H1052.3 V167.6" fill="#eeeeee" stroke="#8d9db4" stroke-width="1"/>
<path d="M1053.3,167.6 V147.6 L1057.8,143.1 H1188.8 V167.6" fill="#eeeeee" stroke="#8d9db4" stroke-width="1"/>
<path d="M1189.8,167.6 V147.6 L1194.3,143.1 H1309.0 V167.6" fill="#eeeeee" stroke="#8d9db4" stroke-width="1"/>
<path d="M1310.0,167.6 V147.6 L1314.5,143.1 H1434.5 V167.6" fill="#eeeeee" stroke="#8d9db4" stroke-width="1"/>
<path d="M1435.5,167.6 V147.6 L1440,143.1 H1594.0 V167.6" fill="#eeeeee" stroke="#8d9db4" stroke-width="1"/>
</g>
<rect x="378.8" y="167.1" width="1221.2" height="1.7" fill="#9db0d6"/>
<rect x="381.8" y="168.8" width="1218.2" height="3.2" fill="url(#bandg)"/>
<rect x="381.8" y="172" width="1203.2" height="1" fill="#7f8c9c"/>
<rect x="381.8" y="172.6" width="1190.2" height="610.4" fill="#ffffff"/>
<rect x="1585" y="172" width="13.5" height="611" fill="#eeeeee"/>
<rect x="1597.2" y="171" width="1.4" height="617" fill="#c9dcf2"/>
<rect x="1598.6" y="167.1" width="1.4" height="621" fill="#8f9db0"/>
<rect x="381.8" y="783" width="1203.2" height="1" fill="#6f7f90"/>
<rect x="381.8" y="784" width="1218.2" height="3" fill="#d6e4f4"/>
<rect x="378.8" y="787.2" width="1221.2" height="1.2" fill="#8ba5d2"/>
<rect x="391.4" y="172.6" width="1" height="610.4" fill="#ebebeb"/>
<defs><clipPath id="codeclip"><rect x="381.8" y="173.0" width="1190.2" height="610.0"/></clipPath><clipPath id="treeclip"><rect x="3.3" y="38" width="352.7" height="748"/></clipPath><radialGradient id="foldg" cx="0.5" cy="0.4" r="0.6"><stop offset="0" stop-color="#e8f4fc"/><stop offset="1" stop-color="#a9c4dc"/></radialGradient><filter id="shad" x="-10%" y="-10%" width="120%" height="120%"><feGaussianBlur stdDeviation="1.2"/></filter></defs>
<g clip-path="url(#codeclip)">
<rect x="392.4" y="638.8000000000001" width="1179.6" height="17.6" fill="#e8f1fc"/>
<ellipse cx="386.5" cy="176.4" rx="3.5" ry="4.3" fill="url(#foldg)" stroke="#b7c8d8" stroke-width="0.8"/>
<rect x="384.2" y="175.79999999999998" width="4.6" height="1.3" fill="#2a3550"/>
<ellipse cx="386.5" cy="484.1000000000001" rx="3.5" ry="4.3" fill="url(#foldg)" stroke="#b7c8d8" stroke-width="0.8"/>
<rect x="384.2" y="483.50000000000006" width="4.6" height="1.3" fill="#2a3550"/>
<ellipse cx="386.5" cy="230.70000000000002" rx="3.5" ry="4.3" fill="url(#foldg)" stroke="#b7c8d8" stroke-width="0.8"/>
<rect x="384.2" y="230.1" width="4.6" height="1.3" fill="#2a3550"/>
<ellipse cx="386.5" cy="520.3" rx="3.5" ry="4.3" fill="url(#foldg)" stroke="#b7c8d8" stroke-width="0.8"/>
<rect x="384.2" y="519.7" width="4.6" height="1.3" fill="#2a3550"/>
<ellipse cx="386.5" cy="303.1" rx="3.5" ry="4.3" fill="url(#foldg)" stroke="#b7c8d8" stroke-width="0.8"/>
<rect x="384.2" y="302.5" width="4.6" height="1.3" fill="#2a3550"/>
<ellipse cx="386.5" cy="393.6" rx="3.5" ry="4.3" fill="url(#foldg)" stroke="#b7c8d8" stroke-width="0.8"/>
<rect x="384.2" y="393.0" width="4.6" height="1.3" fill="#2a3550"/>
<ellipse cx="386.5" cy="411.7" rx="3.5" ry="4.3" fill="url(#foldg)" stroke="#b7c8d8" stroke-width="0.8"/>
<rect x="384.2" y="411.09999999999997" width="4.6" height="1.3" fill="#2a3550"/>
<g transform="translate(392.4,0) scale(0.78720,1)"><text y="181.10" font-family="Liberation Mono" font-size="14.2" stroke-width="0.12" xml:space="preserve"><tspan x="0.000" fill="#7f0055" stroke="#7f0055" stroke-width="0.42">class</tspan><tspan x="42.607" fill="#000000" stroke="#000000"> H2zo$6 </tspan><tspan x="110.778" fill="#7f0055" stroke="#7f0055" stroke-width="0.42">extends</tspan><tspan x="170.428" fill="#000000" stroke="#000000"> BroadcastReceiver {</tspan></text></g>
<g transform="translate(392.4,0) scale(0.78720,1)"><text y="199.20" font-family="Liberation Mono" font-size="14.2" stroke-width="0.12" xml:space="preserve"><tspan x="0.000" fill="#000000" stroke="#000000">  H2zo$6(</tspan><tspan x="76.692" fill="#000000" stroke="#000000">H2zo</tspan><tspan x="110.778" fill="#000000" stroke="#000000"> paramH2zo) {}</tspan></text></g>
<rect x="453.07" y="200.80" width="26.23" height="0.9" fill="#000"/>
<g transform="translate(392.4,0) scale(0.78720,1)"><text y="235.40" font-family="Liberation Mono" font-size="14.2" stroke-width="0.12" xml:space="preserve"><tspan x="17.043" fill="#7f0055" stroke="#7f0055" stroke-width="0.42">public</tspan><tspan x="76.692" fill="#7f0055" stroke="#7f0055" stroke-width="0.42">void</tspan><tspan x="110.778" fill="#000000" stroke="#000000"> onReceive(Context paramContext, Intent paramIntent) {</tspan></text></g>
<g transform="translate(392.4,0) scale(0.78720,1)"><text y="253.50" font-family="Liberation Mono" font-size="14.2" stroke-width="0.12" xml:space="preserve"><tspan x="0.000" fill="#000000" stroke="#000000">    Bundle bundle = paramIntent.getExtras();</tspan></text></g>
<g transform="translate(392.4,0) scale(0.78720,1)"><text y="271.60" font-family="Liberation Mono" font-size="14.2" stroke-width="0.12" xml:space="preserve"><tspan x="0.000" fill="#000000" stroke="#000000">    String str = </tspan><tspan x="144.864" fill="#2a00ff" stroke="#2a00ff">&quot;pdus&quot;</tspan><tspan x="195.992" fill="#000000" stroke="#000000">;</tspan></text></g>
<g transform="translate(392.4,0) scale(0.78720,1)"><text y="289.70" font-family="Liberation Mono" font-size="14.2" stroke-width="0.12" xml:space="preserve"><tspan x="0.000" fill="#000000" stroke="#000000">    Object[] arrayOfObject = (Object[])bundle.get(str);</tspan></text></g>
<g transform="translate(392.4,0) scale(0.78720,1)"><text y="307.80" font-family="Liberation Mono" font-size="14.2" stroke-width="0.12" xml:space="preserve"><tspan x="34.086" fill="#7f0055" stroke="#7f0055" stroke-width="0.42">if</tspan><tspan x="51.128" fill="#000000" stroke="#000000"> (arrayOfObject != </tspan><tspan x="213.035" fill="#7f0055" stroke="#7f0055" stroke-width="0.42">null</tspan><tspan x="247.120" fill="#000000" stroke="#000000">) {</tspan></text></g>
<g transform="translate(392.4,0) scale(0.78720,1)"><text y="325.90" font-family="Liberation Mono" font-size="14.2" stroke-width="0.12" xml:space="preserve"><tspan x="51.128" fill="#7f0055" stroke="#7f0055" stroke-width="0.42">int</tspan><tspan x="76.692" fill="#000000" stroke="#000000"> i = arrayOfObject.length;</tspan></text></g>
<g transform="translate(392.4,0) scale(0.78720,1)"><text y="344.00" font-family="Liberation Mono" font-size="14.2" stroke-width="0.12" xml:space="preserve"><tspan x="51.128" fill="#7f0055" stroke="#7f0055" stroke-width="0.42">int</tspan><tspan x="76.692" fill="#000000" stroke="#000000"> j = 0;</tspan></text></g>
<g transform="translate(392.4,0) scale(0.78720,1)"><text y="362.10" font-family="Liberation Mono" font-size="14.2" stroke-width="0.12" xml:space="preserve"><tspan x="0.000" fill="#000000" stroke="#000000">      str = </tspan><tspan x="102.257" fill="#7f0055" stroke="#7f0055" stroke-width="0.42">null</tspan><tspan x="136.342" fill="#000000" stroke="#000000">;</tspan></text></g>
<g transform="translate(392.4,0) scale(0.78720,1)"><text y="380.20" font-family="Liberation Mono" font-size="14.2" stroke-width="0.12" xml:space="preserve"><tspan x="51.128" fill="#7f0055" stroke="#7f0055" stroke-width="0.42">int</tspan><tspan x="76.692" fill="#000000" stroke="#000000"> k = 0;</tspan></text></g>
<g transform="translate(392.4,0) scale(0.78720,1)"><text y="398.30" font-family="Liberation Mono" font-size="14.2" stroke-width="0.12" xml:space="preserve"><tspan x="51.128" fill="#7f0055" stroke="#7f0055" stroke-width="0.42">while</tspan><tspan x="93.735" fill="#000000" stroke="#000000"> (</tspan><tspan x="110.778" fill="#7f0055" stroke="#7f0055" stroke-width="0.42">true</tspan><tspan x="144.864" fill="#000000" stroke="#000000">) {</tspan></text></g>
<g transform="translate(392.4,0) scale(0.78720,1)"><text y="416.40" font-family="Liberation Mono" font-size="14.2" stroke-width="0.12" xml:space="preserve"><tspan x="68.171" fill="#7f0055" stroke="#7f0055" stroke-width="0.42">if</tspan><tspan x="85.214" fill="#000000" stroke="#000000"> (k &lt; i) {</tspan></text></g>
<g transform="translate(392.4,0) scale(0.78720,1)"><text y="434.50" font-family="Liberation Mono" font-size="14.2" stroke-width="0.12" xml:space="preserve"><tspan x="0.000" fill="#000000" stroke="#000000">          SmsMessage smsMessage = SmsMessage.createFromPdu((</tspan><tspan x="511.283" fill="#7f0055" stroke="#7f0055" stroke-width="0.42">byte</tspan><tspan x="545.369" fill="#000000" stroke="#000000">[])arrayOfObject[k]);</tspan></text></g>
<g transform="translate(392.4,0) scale(0.78720,1)"><text y="452.60" font-family="Liberation Mono" font-size="14.2" stroke-width="0.12" xml:space="preserve"><tspan x="85.214" fill="#000000" stroke="#000000">I0Dv</tspan><tspan x="119.299" fill="#000000" stroke="#000000">.</tspan><tspan x="127.821" fill="#000000" stroke="#000000">L6zT</tspan><tspan x="161.906" fill="#000000" stroke="#000000">(smsMessage.getMessageBody());</tspan></text></g>
<rect x="459.78" y="454.20" width="26.23" height="0.9" fill="#000"/>
<rect x="493.32" y="454.20" width="26.23" height="0.9" fill="#000"/>
<g transform="translate(392.4,0) scale(0.78720,1)"><text y="470.70" font-family="Liberation Mono" font-size="14.2" stroke-width="0.12" xml:space="preserve"><tspan x="85.214" fill="#000000" stroke="#000000">s64G</tspan><tspan x="119.299" fill="#000000" stroke="#000000"> s64G = </tspan><tspan x="187.471" fill="#000000" stroke="#000000">I0Dv</tspan><tspan x="221.556" fill="#000000" stroke="#000000">.</tspan><tspan x="230.077" fill="#000000" stroke="#000000">L6zT</tspan><tspan x="264.163" fill="#000000" stroke="#000000">();</tspan></text></g>
<rect x="459.78" y="472.30" width="26.23" height="0.9" fill="#000"/>
<rect x="540.28" y="472.30" width="26.23" height="0.9" fill="#000"/>
<rect x="573.82" y="472.30" width="26.23" height="0.9" fill="#000"/>
<g transform="translate(392.4,0) scale(0.78720,1)"><text y="488.80" font-family="Liberation Mono" font-size="14.2" stroke-width="0.12" xml:space="preserve"><tspan x="85.214" fill="#7f0055" stroke="#7f0055" stroke-width="0.42">if</tspan><tspan x="102.257" fill="#000000" stroke="#000000"> (s64G != </tspan><tspan x="187.471" fill="#7f0055" stroke="#7f0055" stroke-width="0.42">null</tspan><tspan x="221.556" fill="#000000" stroke="#000000">) {</tspan></text></g>
<g transform="translate(392.4,0) scale(0.78720,1)"><text y="506.90" font-family="Liberation Mono" font-size="14.2" stroke-width="0.12" xml:space="preserve"><tspan x="102.257" fill="#000000" stroke="#000000">s64G$L6zT</tspan><tspan x="178.949" fill="#000000" stroke="#000000"> s64G$L6zT = s64G.</tspan><tspan x="332.334" fill="#000000" stroke="#000000">I9fV</tspan><tspan x="366.420" fill="#000000" stroke="#000000">;</tspan></text></g>
<rect x="473.20" y="508.50" width="59.77" height="0.9" fill="#000"/>
<rect x="654.31" y="508.50" width="26.23" height="0.9" fill="#000"/>
<g transform="translate(392.4,0) scale(0.78720,1)"><text y="525.00" font-family="Liberation Mono" font-size="14.2" stroke-width="0.12" xml:space="preserve"><tspan x="102.257" fill="#7f0055" stroke="#7f0055" stroke-width="0.42">if</tspan><tspan x="119.299" fill="#000000" stroke="#000000"> (s64G$L6zT != </tspan><tspan x="247.120" fill="#7f0055" stroke="#7f0055" stroke-width="0.42">null</tspan><tspan x="281.206" fill="#000000" stroke="#000000">) {</tspan></text></g>
<g transform="translate(392.4,0) scale(0.78720,1)"><text y="543.10" font-family="Liberation Mono" font-size="14.2" stroke-width="0.12" xml:space="preserve"><tspan x="119.299" fill="#000000" stroke="#000000">s64G$L6zT</tspan><tspan x="195.992" fill="#000000" stroke="#000000"> s64G$L6zT1 = s64G.</tspan><tspan x="357.898" fill="#000000" stroke="#000000">I9fV</tspan><tspan x="391.984" fill="#000000" stroke="#000000">;</tspan></text></g>
<rect x="486.61" y="544.70" width="59.77" height="0.9" fill="#000"/>
<rect x="674.44" y="544.70" width="26.23" height="0.9" fill="#000"/>
<g transform="translate(392.4,0) scale(0.78720,1)"><text y="561.20" font-family="Liberation Mono" font-size="14.2" stroke-width="0.12" xml:space="preserve"><tspan x="0.000" fill="#000000" stroke="#000000">              StringBuilder stringBuilder = </tspan><tspan x="374.941" fill="#7f0055" stroke="#7f0055" stroke-width="0.42">new</tspan><tspan x="400.505" fill="#000000" stroke="#000000"> StringBuilder();</tspan></text></g>
<g transform="translate(392.4,0) scale(0.78720,1)"><text y="579.30" font-family="Liberation Mono" font-size="14.2" stroke-width="0.12" xml:space="preserve"><tspan x="119.299" fill="#7f0055" stroke="#7f0055" stroke-width="0.42">this</tspan><tspan x="153.385" fill="#000000" stroke="#000000">();</tspan></text></g>
<g transform="translate(392.4,0) scale(0.78720,1)"><text y="597.40" font-family="Liberation Mono" font-size="14.2" stroke-width="0.12" xml:space="preserve"><tspan x="0.000" fill="#000000" stroke="#000000">              String str2 = </tspan><tspan x="238.599" fill="#2a00ff" stroke="#2a00ff">&quot;SmsAddress:&quot;</tspan><tspan x="349.377" fill="#000000" stroke="#000000">;</tspan></text></g>
<g transform="translate(392.4,0) scale(0.78720,1)"><text y="615.50" font-family="Liberation Mono" font-size="14.2" stroke-width="0.12" xml:space="preserve"><tspan x="0.000" fill="#000000" stroke="#000000">              stringBuilder = stringBuilder.append(str2);</tspan></text></g>
<g transform="translate(392.4,0) scale(0.78720,1)"><text y="633.60" font-family="Liberation Mono" font-size="14.2" stroke-width="0.12" xml:space="preserve"><tspan x="0.000" fill="#000000" stroke="#000000">              String str1 = smsMessage.getOriginatingAddress();</tspan></text></g>
<g transform="translate(392.4,0) scale(0.78720,1)"><text y="651.70" font-family="Liberation Mono" font-size="14.2" stroke-width="0.12" xml:space="preserve"><tspan x="0.000" fill="#000000" stroke="#000000">              str1 = stringBuilder.append(str1).toString();</tspan></text></g>
<g transform="translate(392.4,0) scale(0.78720,1)"><text y="669.80" font-family="Liberation Mono" font-size="14.2" stroke-width="0.12" xml:space="preserve"><tspan x="0.000" fill="#000000" stroke="#000000">              s64G$L6zT1.</tspan><tspan x="213.035" fill="#000000" stroke="#000000">I9fV</tspan><tspan x="247.120" fill="#000000" stroke="#000000">(str1);</tspan></text></g>
<rect x="560.40" y="671.40" width="26.23" height="0.9" fill="#000"/>
<g transform="translate(392.4,0) scale(0.78720,1)"><text y="687.90" font-family="Liberation Mono" font-size="14.2" stroke-width="0.12" xml:space="preserve"><tspan x="0.000" fill="#000000" stroke="#000000">            }</tspan></text></g>
<g transform="translate(392.4,0) scale(0.78720,1)"><text y="706.00" font-family="Liberation Mono" font-size="14.2" stroke-width="0.12" xml:space="preserve"><tspan x="0.000" fill="#000000" stroke="#000000">          }</tspan></text></g>
<g transform="translate(392.4,0) scale(0.78720,1)"><text y="724.10" font-family="Liberation Mono" font-size="14.2" stroke-width="0.12" xml:space="preserve"><tspan x="0.000" fill="#000000" stroke="#000000">          j = k + 1;</tspan></text></g>
<g transform="translate(392.4,0) scale(0.78720,1)"><text y="742.20" font-family="Liberation Mono" font-size="14.2" stroke-width="0.12" xml:space="preserve"><tspan x="0.000" fill="#000000" stroke="#000000">          k = j;</tspan></text></g>
<g transform="translate(392.4,0) scale(0.78720,1)"><text y="760.30" font-family="Liberation Mono" font-size="14.2" stroke-width="0.12" xml:space="preserve"><tspan x="85.214" fill="#7f0055" stroke="#7f0055" stroke-width="0.42">continue</tspan><tspan x="153.385" fill="#000000" stroke="#000000">;</tspan></text></g>
<g transform="translate(392.4,0) scale(0.78720,1)"><text y="778.40" font-family="Liberation Mono" font-size="14.2" stroke-width="0.12" xml:space="preserve"><tspan x="0.000" fill="#000000" stroke="#000000">        }</tspan></text></g>
<g>
<rect x="400.9" y="219.1" width="592.5" height="455.1" fill="none" stroke="#7a8a8a" stroke-width="2.2" opacity="0.65" filter="url(#shad)"/>
<rect x="398.75" y="216.95" width="592.5" height="455.1" fill="none" stroke="#ff0000" stroke-width="1.6"/>
</g>
</g>
<g fill="none" stroke-linecap="round"><path d="M1488,767 A17,17 0 1 0 1476,777.5" stroke="#c4c4c4" stroke-width="1.3"/><path d="M1466.7,760.6 L1474.4,756.1" stroke="#a8a8a8" stroke-width="1.2"/><path d="M1471.2,759.5 L1475,774.5 M1471.2,759.5 L1482.5,771" stroke="#b0b0b0" stroke-width="1"/></g>
<text x="1497.5" y="768.3" font-family="Liberation Sans" font-size="21.5" fill="#ffffff" stroke="#cfcfcf" stroke-width="0.9">Seebug</text>
<rect x="1572" y="172.6" width="13" height="610.4" fill="#eeeeee"/>
<rect x="1572" y="172.6" width="1" height="610.4" fill="#b4c2d2"/>
<rect x="1584" y="172.6" width="1.2" height="610.4" fill="#8f9cad"/>
<path d="M1575,182.6 L1578.5,178.2 L1582,182.6 Z" fill="#111"/>
<rect x="1572" y="188.6" width="13" height="1.3" fill="#8aa4d0"/>
<rect x="1572.5" y="289.4" width="12" height="404.5" fill="url(#thumbg)" stroke="#8aa4d0" stroke-width="1"/>
<rect x="1584" y="172.6" width="1.2" height="610.4" fill="#7f8c9c"/>
<rect x="1585.2" y="172.6" width="0.9" height="610.4" fill="#ffffff"/>
<rect x="1572" y="288.6" width="13" height="1.5" fill="#5f80c8"/>
<path d="M1575.5,489.5 H1581.5 M1575.5,491.7 H1581.5 M1575.5,493.9 H1581.5" stroke="#7f9ad0" stroke-width="0.9"/>
<rect x="1572" y="766" width="13" height="1.3" fill="#8f9cad"/>
<path d="M1575,772 L1578.5,776.3 L1582,772 Z" fill="#111"/>
<rect x="1586.2" y="612.8" width="11" height="1.4" fill="#80b4f4"/>
<path d="M391.57728828125,45.4 H395.97728828125 L398.97728828125,49.199999999999996 V59.599999999999994 H390.37728828125 V51.8" fill="#fbfbf8" stroke="#c4a048" stroke-width="1.1"/><rect x="391.17728828125" y="52.199999999999996" width="9.4" height="5.8" fill="#e3e9f4"/><ellipse cx="392.67728828125" cy="55.0" rx="0.95" ry="2.1" fill="none" stroke="#2f4f90" stroke-width="1.1"/><rect x="395.27728828125" y="52.699999999999996" width="1.3" height="4.6" fill="#2f4f90"/><ellipse cx="399.27728828125" cy="55.0" rx="1.1" ry="2.3" fill="none" stroke="#3a5a9a" stroke-width="1.2"/><path d="M391.47728828125,44.5 V49.699999999999996 Q391.47728828125,51.0 389.17728828125,51.0" fill="none" stroke="#2a6cb4" stroke-width="1.5"/>
<text transform="translate(404.08,56.20) scale(0.86,1)" font-family="Liberation Sans" font-size="13.6" fill="#1a1a1a" stroke="#1a1a1a" stroke-width="0.5" letter-spacing="0.36">s64G$l47C.class</text>
<path d="M500.92271171875,48.2 L507.22271171874996,54.5 M507.22271171874996,48.2 L500.92271171875,54.5" stroke="#858578" stroke-width="3.3" stroke-linecap="round"/><path d="M500.92271171875,48.2 L507.22271171874996,54.5 M507.22271171874996,48.2 L500.92271171875,54.5" stroke="#ffffff" stroke-width="1.7" stroke-linecap="round"/>
<path d="M530.3809015625001,45.4 H534.7809015625 L537.7809015625,49.199999999999996 V59.599999999999994 H529.1809015625 V51.8" fill="#fbfbf8" stroke="#c4a048" stroke-width="1.1"/><rect x="529.9809015625" y="52.199999999999996" width="9.4" height="5.8" fill="#e3e9f4"/><ellipse cx="531.4809015625" cy="55.0" rx="0.95" ry="2.1" fill="none" stroke="#2f4f90" stroke-width="1.1"/><rect x="534.0809015625" y="52.699999999999996" width="1.3" height="4.6" fill="#2f4f90"/><ellipse cx="538.0809015625" cy="55.0" rx="1.1" ry="2.3" fill="none" stroke="#3a5a9a" stroke-width="1.2"/><path d="M530.2809015625,44.5 V49.699999999999996 Q530.2809015625,51.0 527.9809015625,51.0" fill="none" stroke="#2a6cb4" stroke-width="1.5"/>
<text transform="translate(542.88,56.20) scale(0.86,1)" font-family="Liberation Sans" font-size="13.6" fill="#1a1a1a" stroke="#1a1a1a" stroke-width="0.5" letter-spacing="0.36">s64G.class</text>
<path d="M607.6190984375,48.2 L613.9190984375,54.5 M613.9190984375,48.2 L607.6190984375,54.5" stroke="#858578" stroke-width="3.3" stroke-linecap="round"/><path d="M607.6190984375,48.2 L613.9190984375,54.5 M613.9190984375,48.2 L607.6190984375,54.5" stroke="#ffffff" stroke-width="1.7" stroke-linecap="round"/>
<path d="M639.280425,45.4 H643.680425 L646.680425,49.199999999999996 V59.599999999999994 H638.080425 V51.8" fill="#fbfbf8" stroke="#c4a048" stroke-width="1.1"/><rect x="638.880425" y="52.199999999999996" width="9.4" height="5.8" fill="#e3e9f4"/><ellipse cx="640.380425" cy="55.0" rx="0.95" ry="2.1" fill="none" stroke="#2f4f90" stroke-width="1.1"/><rect x="642.980425" y="52.699999999999996" width="1.3" height="4.6" fill="#2f4f90"/><ellipse cx="646.980425" cy="55.0" rx="1.1" ry="2.3" fill="none" stroke="#3a5a9a" stroke-width="1.2"/><path d="M639.180425,44.5 V49.699999999999996 Q639.180425,51.0 636.880425,51.0" fill="none" stroke="#2a6cb4" stroke-width="1.5"/>
<text transform="translate(651.78,56.20) scale(0.86,1)" font-family="Liberation Sans" font-size="13.6" fill="#1a1a1a" stroke="#1a1a1a" stroke-width="0.5" letter-spacing="0.36">y0jp.class</text>
<path d="M710.019575,48.2 L716.319575,54.5 M716.319575,48.2 L710.019575,54.5" stroke="#858578" stroke-width="3.3" stroke-linecap="round"/><path d="M710.019575,48.2 L716.319575,54.5 M716.319575,48.2 L710.019575,54.5" stroke="#ffffff" stroke-width="1.7" stroke-linecap="round"/>
<path d="M741.6920671875,45.4 H746.0920671875 L749.0920671875,49.199999999999996 V59.599999999999994 H740.4920671875 V51.8" fill="#fbfbf8" stroke="#c4a048" stroke-width="1.1"/><rect x="741.2920671874999" y="52.199999999999996" width="9.4" height="5.8" fill="#e3e9f4"/><ellipse cx="742.7920671874999" cy="55.0" rx="0.95" ry="2.1" fill="none" stroke="#2f4f90" stroke-width="1.1"/><rect x="745.3920671875" y="52.699999999999996" width="1.3" height="4.6" fill="#2f4f90"/><ellipse cx="749.3920671875" cy="55.0" rx="1.1" ry="2.3" fill="none" stroke="#3a5a9a" stroke-width="1.2"/><path d="M741.5920671875,44.5 V49.699999999999996 Q741.5920671875,51.0 739.2920671874999,51.0" fill="none" stroke="#2a6cb4" stroke-width="1.5"/>
<text transform="translate(754.19,56.20) scale(0.86,1)" font-family="Liberation Sans" font-size="13.6" fill="#1a1a1a" stroke="#1a1a1a" stroke-width="0.5" letter-spacing="0.36">H2zo$3.class</text>
<path d="M831.9079328125,48.2 L838.2079328125,54.5 M838.2079328125,48.2 L831.9079328125,54.5" stroke="#858578" stroke-width="3.3" stroke-linecap="round"/><path d="M831.9079328125,48.2 L838.2079328125,54.5 M838.2079328125,48.2 L831.9079328125,54.5" stroke="#ffffff" stroke-width="1.7" stroke-linecap="round"/>
<path d="M862.1920671875,45.4 H866.5920671875 L869.5920671875,49.199999999999996 V59.599999999999994 H860.9920671875 V51.8" fill="#fbfbf8" stroke="#c4a048" stroke-width="1.1"/><rect x="861.7920671874999" y="52.199999999999996" width="9.4" height="5.8" fill="#e3e9f4"/><ellipse cx="863.2920671874999" cy="55.0" rx="0.95" ry="2.1" fill="none" stroke="#2f4f90" stroke-width="1.1"/><rect x="865.8920671875" y="52.699999999999996" width="1.3" height="4.6" fill="#2f4f90"/><ellipse cx="869.8920671875" cy="55.0" rx="1.1" ry="2.3" fill="none" stroke="#3a5a9a" stroke-width="1.2"/><path d="M862.0920671875,44.5 V49.699999999999996 Q862.0920671875,51.0 859.7920671874999,51.0" fill="none" stroke="#2a6cb4" stroke-width="1.5"/>
<text transform="translate(874.69,56.20) scale(0.86,1)" font-family="Liberation Sans" font-size="13.6" fill="#1a1a1a" stroke="#1a1a1a" stroke-width="0.5" letter-spacing="0.36">H2zo$4.class</text>
<path d="M952.4079328125,48.2 L958.7079328125,54.5 M958.7079328125,48.2 L952.4079328125,54.5" stroke="#858578" stroke-width="3.3" stroke-linecap="round"/><path d="M952.4079328125,48.2 L958.7079328125,54.5 M958.7079328125,48.2 L952.4079328125,54.5" stroke="#ffffff" stroke-width="1.7" stroke-linecap="round"/>
<path d="M982.8420671874999,45.4 H987.2420671874999 L990.2420671874999,49.199999999999996 V59.599999999999994 H981.6420671874998 V51.8" fill="#fbfbf8" stroke="#c4a048" stroke-width="1.1"/><rect x="982.4420671874998" y="52.199999999999996" width="9.4" height="5.8" fill="#e3e9f4"/><ellipse cx="983.9420671874998" cy="55.0" rx="0.95" ry="2.1" fill="none" stroke="#2f4f90" stroke-width="1.1"/><rect x="986.5420671874998" y="52.699999999999996" width="1.3" height="4.6" fill="#2f4f90"/><ellipse cx="990.5420671874998" cy="55.0" rx="1.1" ry="2.3" fill="none" stroke="#3a5a9a" stroke-width="1.2"/><path d="M982.7420671874999,44.5 V49.699999999999996 Q982.7420671874999,51.0 980.4420671874998,51.0" fill="none" stroke="#2a6cb4" stroke-width="1.5"/>
<text transform="translate(995.34,56.20) scale(0.86,1)" font-family="Liberation Sans" font-size="13.6" fill="#1a1a1a" stroke="#1a1a1a" stroke-width="0.5" letter-spacing="0.36">H2zo$5.class</text>
<path d="M1073.0579328124998,48.2 L1079.3579328125,54.5 M1079.3579328125,48.2 L1073.0579328124998,54.5" stroke="#858578" stroke-width="3.3" stroke-linecap="round"/><path d="M1073.0579328124998,48.2 L1079.3579328125,54.5 M1079.3579328125,48.2 L1073.0579328124998,54.5" stroke="#ffffff" stroke-width="1.7" stroke-linecap="round"/>
<path d="M1102.9920671875,45.4 H1107.3920671874998 L1110.3920671874998,49.199999999999996 V59.599999999999994 H1101.7920671875 V51.8" fill="#fbfbf8" stroke="#c4a048" stroke-width="1.1"/><rect x="1102.5920671874999" y="52.199999999999996" width="9.4" height="5.8" fill="#e3e9f4"/><ellipse cx="1104.0920671874999" cy="55.0" rx="0.95" ry="2.1" fill="none" stroke="#2f4f90" stroke-width="1.1"/><rect x="1106.6920671875" y="52.699999999999996" width="1.3" height="4.6" fill="#2f4f90"/><ellipse cx="1110.6920671875" cy="55.0" rx="1.1" ry="2.3" fill="none" stroke="#3a5a9a" stroke-width="1.2"/><path d="M1102.8920671874998,44.5 V49.699999999999996 Q1102.8920671874998,51.0 1100.5920671874999,51.0" fill="none" stroke="#2a6cb4" stroke-width="1.5"/>
<text transform="translate(1115.49,56.20) scale(0.86,1)" font-family="Liberation Sans" font-size="13.6" fill="#1a1a1a" stroke="#1a1a1a" stroke-width="0.5" letter-spacing="0.36">H2zo$6.class</text>
<path d="M1193.2079328124998,48.2 L1199.5079328125,54.5 M1199.5079328125,48.2 L1193.2079328124998,54.5" stroke="#858578" stroke-width="3.3" stroke-linecap="round"/><path d="M1193.2079328124998,48.2 L1199.5079328125,54.5 M1199.5079328125,48.2 L1193.2079328124998,54.5" stroke="#ffffff" stroke-width="1.7" stroke-linecap="round"/>
<path d="M414.21787578125003,71.0 H418.61787578125006 L421.61787578125006,74.8 V85.2 H413.01787578125004 V77.4" fill="#fbfbf8" stroke="#c4a048" stroke-width="1.1"/><rect x="413.81787578125005" y="77.8" width="9.4" height="5.8" fill="#e3e9f4"/><ellipse cx="415.31787578125005" cy="80.6" rx="0.95" ry="2.1" fill="none" stroke="#2f4f90" stroke-width="1.1"/><rect x="417.91787578125" y="78.3" width="1.3" height="4.6" fill="#2f4f90"/><ellipse cx="421.91787578125" cy="80.6" rx="1.1" ry="2.3" fill="none" stroke="#3a5a9a" stroke-width="1.2"/><path d="M414.11787578125006,70.1 V75.3 Q414.11787578125006,76.6 411.81787578125005,76.6" fill="none" stroke="#2a6cb4" stroke-width="1.5"/>
<text transform="translate(426.72,81.80) scale(0.86,1)" font-family="Liberation Sans" font-size="13.6" fill="#1a1a1a" stroke="#1a1a1a" stroke-width="0.5" letter-spacing="0.36">r9xq$2.class</text>
<path d="M499.88212421875005,73.79999999999998 L506.18212421875,80.1 M506.18212421875,73.79999999999998 L499.88212421875005,80.1" stroke="#858578" stroke-width="3.3" stroke-linecap="round"/><path d="M499.88212421875005,73.79999999999998 L506.18212421875,80.1 M506.18212421875,73.79999999999998 L499.88212421875005,80.1" stroke="#ffffff" stroke-width="1.7" stroke-linecap="round"/>
<path d="M574.26787578125,71.0 H578.66787578125 L581.66787578125,74.8 V85.2 H573.06787578125 V77.4" fill="#fbfbf8" stroke="#c4a048" stroke-width="1.1"/><rect x="573.86787578125" y="77.8" width="9.4" height="5.8" fill="#e3e9f4"/><ellipse cx="575.36787578125" cy="80.6" rx="0.95" ry="2.1" fill="none" stroke="#2f4f90" stroke-width="1.1"/><rect x="577.96787578125" y="78.3" width="1.3" height="4.6" fill="#2f4f90"/><ellipse cx="581.96787578125" cy="80.6" rx="1.1" ry="2.3" fill="none" stroke="#3a5a9a" stroke-width="1.2"/><path d="M574.16787578125,70.1 V75.3 Q574.16787578125,76.6 571.86787578125,76.6" fill="none" stroke="#2a6cb4" stroke-width="1.5"/>
<text transform="translate(586.77,81.80) scale(0.86,1)" font-family="Liberation Sans" font-size="13.6" fill="#1a1a1a" stroke="#1a1a1a" stroke-width="0.5" letter-spacing="0.36">r9xq$3.class</text>
<path d="M659.93212421875,73.79999999999998 L666.23212421875,80.1 M666.23212421875,73.79999999999998 L659.93212421875,80.1" stroke="#858578" stroke-width="3.3" stroke-linecap="round"/><path d="M659.93212421875,73.79999999999998 L666.23212421875,80.1 M666.23212421875,73.79999999999998 L659.93212421875,80.1" stroke="#ffffff" stroke-width="1.7" stroke-linecap="round"/>
<path d="M734.26787578125,71.0 H738.66787578125 L741.66787578125,74.8 V85.2 H733.06787578125 V77.4" fill="#fbfbf8" stroke="#c4a048" stroke-width="1.1"/><rect x="733.86787578125" y="77.8" width="9.4" height="5.8" fill="#e3e9f4"/><ellipse cx="735.36787578125" cy="80.6" rx="0.95" ry="2.1" fill="none" stroke="#2f4f90" stroke-width="1.1"/><rect x="737.96787578125" y="78.3" width="1.3" height="4.6" fill="#2f4f90"/><ellipse cx="741.96787578125" cy="80.6" rx="1.1" ry="2.3" fill="none" stroke="#3a5a9a" stroke-width="1.2"/><path d="M734.16787578125,70.1 V75.3 Q734.16787578125,76.6 731.86787578125,76.6" fill="none" stroke="#2a6cb4" stroke-width="1.5"/>
<text transform="translate(746.77,81.80) scale(0.86,1)" font-family="Liberation Sans" font-size="13.6" fill="#1a1a1a" stroke="#1a1a1a" stroke-width="0.5" letter-spacing="0.36">r9xq$4.class</text>
<path d="M819.93212421875,73.79999999999998 L826.23212421875,80.1 M826.23212421875,73.79999999999998 L819.93212421875,80.1" stroke="#858578" stroke-width="3.3" stroke-linecap="round"/><path d="M819.93212421875,73.79999999999998 L826.23212421875,80.1 M826.23212421875,73.79999999999998 L819.93212421875,80.1" stroke="#ffffff" stroke-width="1.7" stroke-linecap="round"/>
<path d="M897.39021015625,71.0 H901.7902101562499 L904.7902101562499,74.8 V85.2 H896.1902101562499 V77.4" fill="#fbfbf8" stroke="#c4a048" stroke-width="1.1"/><rect x="896.9902101562499" y="77.8" width="9.4" height="5.8" fill="#e3e9f4"/><ellipse cx="898.4902101562499" cy="80.6" rx="0.95" ry="2.1" fill="none" stroke="#2f4f90" stroke-width="1.1"/><rect x="901.0902101562499" y="78.3" width="1.3" height="4.6" fill="#2f4f90"/><ellipse cx="905.0902101562499" cy="80.6" rx="1.1" ry="2.3" fill="none" stroke="#3a5a9a" stroke-width="1.2"/><path d="M897.2902101562499,70.1 V75.3 Q897.2902101562499,76.6 894.9902101562499,76.6" fill="none" stroke="#2a6cb4" stroke-width="1.5"/>
<text transform="translate(909.89,81.80) scale(0.86,1)" font-family="Liberation Sans" font-size="13.6" fill="#1a1a1a" stroke="#1a1a1a" stroke-width="0.5" letter-spacing="0.36">r9xq$I9fV.class</text>
<path d="M997.20978984375,73.79999999999998 L1003.5097898437499,80.1 M1003.5097898437499,73.79999999999998 L997.20978984375,80.1" stroke="#858578" stroke-width="3.3" stroke-linecap="round"/><path d="M997.20978984375,73.79999999999998 L1003.5097898437499,80.1 M1003.5097898437499,73.79999999999998 L997.20978984375,80.1" stroke="#ffffff" stroke-width="1.7" stroke-linecap="round"/>
<path d="M1077.953096875,71.0 H1082.353096875 L1085.353096875,74.8 V85.2 H1076.753096875 V77.4" fill="#fbfbf8" stroke="#c4a048" stroke-width="1.1"/><rect x="1077.553096875" y="77.8" width="9.4" height="5.8" fill="#e3e9f4"/><ellipse cx="1079.053096875" cy="80.6" rx="0.95" ry="2.1" fill="none" stroke="#2f4f90" stroke-width="1.1"/><rect x="1081.653096875" y="78.3" width="1.3" height="4.6" fill="#2f4f90"/><ellipse cx="1085.653096875" cy="80.6" rx="1.1" ry="2.3" fill="none" stroke="#3a5a9a" stroke-width="1.2"/><path d="M1077.853096875,70.1 V75.3 Q1077.853096875,76.6 1075.553096875,76.6" fill="none" stroke="#2a6cb4" stroke-width="1.5"/>
<text transform="translate(1090.45,81.80) scale(0.86,1)" font-family="Liberation Sans" font-size="13.6" fill="#1a1a1a" stroke="#1a1a1a" stroke-width="0.5" letter-spacing="0.36">r9xq$L6zT.class</text>
<path d="M1182.746903125,73.79999999999998 L1189.0469031250002,80.1 M1189.0469031250002,73.79999999999998 L1182.746903125,80.1" stroke="#858578" stroke-width="3.3" stroke-linecap="round"/><path d="M1182.746903125,73.79999999999998 L1189.0469031250002,80.1 M1189.0469031250002,73.79999999999998 L1182.746903125,80.1" stroke="#ffffff" stroke-width="1.7" stroke-linecap="round"/>
<path d="M1262.088878125,71.0 H1266.488878125 L1269.488878125,74.8 V85.2 H1260.888878125 V77.4" fill="#fbfbf8" stroke="#c4a048" stroke-width="1.1"/><rect x="1261.688878125" y="77.8" width="9.4" height="5.8" fill="#e3e9f4"/><ellipse cx="1263.188878125" cy="80.6" rx="0.95" ry="2.1" fill="none" stroke="#2f4f90" stroke-width="1.1"/><rect x="1265.788878125" y="78.3" width="1.3" height="4.6" fill="#2f4f90"/><ellipse cx="1269.788878125" cy="80.6" rx="1.1" ry="2.3" fill="none" stroke="#3a5a9a" stroke-width="1.2"/><path d="M1261.988878125,70.1 V75.3 Q1261.988878125,76.6 1259.688878125,76.6" fill="none" stroke="#2a6cb4" stroke-width="1.5"/>
<text transform="translate(1274.59,81.80) scale(0.86,1)" font-family="Liberation Sans" font-size="13.6" fill="#1a1a1a" stroke="#1a1a1a" stroke-width="0.5" letter-spacing="0.36">s64G$I9fV.class</text>
<path d="M1367.111121875,73.79999999999998 L1373.4111218750002,80.1 M1373.4111218750002,73.79999999999998 L1367.111121875,80.1" stroke="#858578" stroke-width="3.3" stroke-linecap="round"/><path d="M1367.111121875,73.79999999999998 L1373.4111218750002,80.1 M1373.4111218750002,73.79999999999998 L1367.111121875,80.1" stroke="#ffffff" stroke-width="1.7" stroke-linecap="round"/>
<path d="M1443.5017648437502,71.0 H1447.90176484375 L1450.90176484375,74.8 V85.2 H1442.30176484375 V77.4" fill="#fbfbf8" stroke="#c4a048" stroke-width="1.1"/><rect x="1443.10176484375" y="77.8" width="9.4" height="5.8" fill="#e3e9f4"/><ellipse cx="1444.60176484375" cy="80.6" rx="0.95" ry="2.1" fill="none" stroke="#2f4f90" stroke-width="1.1"/><rect x="1447.2017648437502" y="78.3" width="1.3" height="4.6" fill="#2f4f90"/><ellipse cx="1451.2017648437502" cy="80.6" rx="1.1" ry="2.3" fill="none" stroke="#3a5a9a" stroke-width="1.2"/><path d="M1443.40176484375,70.1 V75.3 Q1443.40176484375,76.6 1441.10176484375,76.6" fill="none" stroke="#2a6cb4" stroke-width="1.5"/>
<text transform="translate(1456.00,81.80) scale(0.86,1)" font-family="Liberation Sans" font-size="13.6" fill="#1a1a1a" stroke="#1a1a1a" stroke-width="0.5" letter-spacing="0.36">s64G$L6zT.class</text>
<path d="M1553.49823515625,73.79999999999998 L1559.7982351562503,80.1 M1559.7982351562503,73.79999999999998 L1553.49823515625,80.1" stroke="#858578" stroke-width="3.3" stroke-linecap="round"/><path d="M1553.49823515625,73.79999999999998 L1559.7982351562503,80.1 M1559.7982351562503,73.79999999999998 L1553.49823515625,80.1" stroke="#ffffff" stroke-width="1.7" stroke-linecap="round"/>
<path d="M410.56516328125,96.60000000000001 H414.96516328125006 L417.96516328125006,100.4 V110.80000000000001 H409.36516328125003 V103.00000000000001" fill="#fbfbf8" stroke="#c4a048" stroke-width="1.1"/><rect x="410.16516328125005" y="103.4" width="9.4" height="5.8" fill="#e3e9f4"/><ellipse cx="411.66516328125005" cy="106.2" rx="0.95" ry="2.1" fill="none" stroke="#2f4f90" stroke-width="1.1"/><rect x="414.26516328125" y="103.9" width="1.3" height="4.6" fill="#2f4f90"/><ellipse cx="418.26516328125" cy="106.2" rx="1.1" ry="2.3" fill="none" stroke="#3a5a9a" stroke-width="1.2"/><path d="M410.46516328125006,95.7 V100.9 Q410.46516328125006,102.2 408.16516328125005,102.2" fill="none" stroke="#2a6cb4" stroke-width="1.5"/>
<text transform="translate(423.07,107.40) scale(0.86,1)" font-family="Liberation Sans" font-size="13.6" fill="#1a1a1a" stroke="#1a1a1a" stroke-width="0.5" letter-spacing="0.36">L5ww$I9fV.class</text>
<path d="M517.5348367187501,99.39999999999999 L523.83483671875,105.7 M523.83483671875,99.39999999999999 L517.5348367187501,105.7" stroke="#858578" stroke-width="3.3" stroke-linecap="round"/><path d="M517.5348367187501,99.39999999999999 L523.83483671875,105.7 M523.83483671875,99.39999999999999 L517.5348367187501,105.7" stroke="#ffffff" stroke-width="1.7" stroke-linecap="round"/>
<path d="M585.47805,96.60000000000001 H589.87805 L592.87805,100.4 V110.80000000000001 H584.27805 V103.00000000000001" fill="#fbfbf8" stroke="#c4a048" stroke-width="1.1"/><rect x="585.07805" y="103.4" width="9.4" height="5.8" fill="#e3e9f4"/><ellipse cx="586.57805" cy="106.2" rx="0.95" ry="2.1" fill="none" stroke="#2f4f90" stroke-width="1.1"/><rect x="589.17805" y="103.9" width="1.3" height="4.6" fill="#2f4f90"/><ellipse cx="593.17805" cy="106.2" rx="1.1" ry="2.3" fill="none" stroke="#3a5a9a" stroke-width="1.2"/><path d="M585.37805,95.7 V100.9 Q585.37805,102.2 583.07805,102.2" fill="none" stroke="#2a6cb4" stroke-width="1.5"/>
<text transform="translate(597.98,107.40) scale(0.86,1)" font-family="Liberation Sans" font-size="13.6" fill="#1a1a1a" stroke="#1a1a1a" stroke-width="0.5" letter-spacing="0.36">L5ww$L6zT.class</text>
<path d="M697.42195,99.39999999999999 L703.72195,105.7 M703.72195,99.39999999999999 L697.42195,105.7" stroke="#858578" stroke-width="3.3" stroke-linecap="round"/><path d="M697.42195,99.39999999999999 L703.72195,105.7 M703.72195,99.39999999999999 L697.42195,105.7" stroke="#ffffff" stroke-width="1.7" stroke-linecap="round"/>
<path d="M764.7535734375,96.60000000000001 H769.1535734375 L772.1535734375,100.4 V110.80000000000001 H763.5535734375 V103.00000000000001" fill="#fbfbf8" stroke="#c4a048" stroke-width="1.1"/><rect x="764.3535734374999" y="103.4" width="9.4" height="5.8" fill="#e3e9f4"/><ellipse cx="765.8535734374999" cy="106.2" rx="0.95" ry="2.1" fill="none" stroke="#2f4f90" stroke-width="1.1"/><rect x="768.4535734374999" y="103.9" width="1.3" height="4.6" fill="#2f4f90"/><ellipse cx="772.4535734374999" cy="106.2" rx="1.1" ry="2.3" fill="none" stroke="#3a5a9a" stroke-width="1.2"/><path d="M764.6535734375,95.7 V100.9 Q764.6535734375,102.2 762.3535734374999,102.2" fill="none" stroke="#2a6cb4" stroke-width="1.5"/>
<text transform="translate(777.25,107.40) scale(0.86,1)" font-family="Liberation Sans" font-size="13.6" fill="#1a1a1a" stroke="#1a1a1a" stroke-width="0.5" letter-spacing="0.36">L5ww$l47C.class</text>
<path d="M876.0464265625,99.39999999999999 L882.3464265624999,105.7 M882.3464265624999,99.39999999999999 L876.0464265625,105.7" stroke="#858578" stroke-width="3.3" stroke-linecap="round"/><path d="M876.0464265625,99.39999999999999 L882.3464265624999,105.7 M882.3464265624999,99.39999999999999 L876.0464265625,105.7" stroke="#ffffff" stroke-width="1.7" stroke-linecap="round"/>
<path d="M939.2298546875,96.60000000000001 H943.6298546875 L946.6298546875,100.4 V110.80000000000001 H938.0298546875 V103.00000000000001" fill="#fbfbf8" stroke="#c4a048" stroke-width="1.1"/><rect x="938.8298546875" y="103.4" width="9.4" height="5.8" fill="#e3e9f4"/><ellipse cx="940.3298546875" cy="106.2" rx="0.95" ry="2.1" fill="none" stroke="#2f4f90" stroke-width="1.1"/><rect x="942.9298546875" y="103.9" width="1.3" height="4.6" fill="#2f4f90"/><ellipse cx="946.9298546875" cy="106.2" rx="1.1" ry="2.3" fill="none" stroke="#3a5a9a" stroke-width="1.2"/><path d="M939.1298546875,95.7 V100.9 Q939.1298546875,102.2 936.8298546875,102.2" fill="none" stroke="#2a6cb4" stroke-width="1.5"/>
<text transform="translate(951.73,107.40) scale(0.86,1)" font-family="Liberation Sans" font-size="13.6" fill="#1a1a1a" stroke="#1a1a1a" stroke-width="0.5" letter-spacing="0.36">L5ww.class</text>
<path d="M1017.7701453125001,99.39999999999999 L1024.0701453125002,105.7 M1024.0701453125002,99.39999999999999 L1017.7701453125001,105.7" stroke="#858578" stroke-width="3.3" stroke-linecap="round"/><path d="M1017.7701453125001,99.39999999999999 L1024.0701453125002,105.7 M1024.0701453125002,99.39999999999999 L1017.7701453125001,105.7" stroke="#ffffff" stroke-width="1.7" stroke-linecap="round"/>
<path d="M1077.00566328125,96.60000000000001 H1081.4056632812499 L1084.4056632812499,100.4 V110.80000000000001 H1075.80566328125 V103.00000000000001" fill="#fbfbf8" stroke="#c4a048" stroke-width="1.1"/><rect x="1076.60566328125" y="103.4" width="9.4" height="5.8" fill="#e3e9f4"/><ellipse cx="1078.10566328125" cy="106.2" rx="0.95" ry="2.1" fill="none" stroke="#2f4f90" stroke-width="1.1"/><rect x="1080.70566328125" y="103.9" width="1.3" height="4.6" fill="#2f4f90"/><ellipse cx="1084.70566328125" cy="106.2" rx="1.1" ry="2.3" fill="none" stroke="#3a5a9a" stroke-width="1.2"/><path d="M1076.9056632812499,95.7 V100.9 Q1076.9056632812499,102.2 1074.60566328125,102.2" fill="none" stroke="#2a6cb4" stroke-width="1.5"/>
<text transform="translate(1089.51,107.40) scale(0.86,1)" font-family="Liberation Sans" font-size="13.6" fill="#1a1a1a" stroke="#1a1a1a" stroke-width="0.5" letter-spacing="0.36">L6zT.class</text>
<path d="M1150.99433671875,99.39999999999999 L1157.2943367187502,105.7 M1157.2943367187502,99.39999999999999 L1150.99433671875,105.7" stroke="#858578" stroke-width="3.3" stroke-linecap="round"/><path d="M1150.99433671875,99.39999999999999 L1157.2943367187502,105.7 M1157.2943367187502,99.39999999999999 L1150.99433671875,105.7" stroke="#ffffff" stroke-width="1.7" stroke-linecap="round"/>
<path d="M1208.1366125,96.60000000000001 H1212.5366124999998 L1215.5366124999998,100.4 V110.80000000000001 H1206.9366125 V103.00000000000001" fill="#fbfbf8" stroke="#c4a048" stroke-width="1.1"/><rect x="1207.7366124999999" y="103.4" width="9.4" height="5.8" fill="#e3e9f4"/><ellipse cx="1209.2366124999999" cy="106.2" rx="0.95" ry="2.1" fill="none" stroke="#2f4f90" stroke-width="1.1"/><rect x="1211.8366125" y="103.9" width="1.3" height="4.6" fill="#2f4f90"/><ellipse cx="1215.8366125" cy="106.2" rx="1.1" ry="2.3" fill="none" stroke="#3a5a9a" stroke-width="1.2"/><path d="M1208.0366124999998,95.7 V100.9 Q1208.0366124999998,102.2 1205.7366124999999,102.2" fill="none" stroke="#2a6cb4" stroke-width="1.5"/>
<text transform="translate(1220.64,107.40) scale(0.86,1)" font-family="Liberation Sans" font-size="13.6" fill="#1a1a1a" stroke="#1a1a1a" stroke-width="0.5" letter-spacing="0.36">T1Hs.class</text>
<path d="M1285.3633874999998,99.39999999999999 L1291.6633875,105.7 M1291.6633875,99.39999999999999 L1285.3633874999998,105.7" stroke="#858578" stroke-width="3.3" stroke-linecap="round"/><path d="M1285.3633874999998,99.39999999999999 L1291.6633875,105.7 M1291.6633875,99.39999999999999 L1285.3633874999998,105.7" stroke="#ffffff" stroke-width="1.7" stroke-linecap="round"/>
<path d="M1341.8311867187501,96.60000000000001 H1346.23118671875 L1349.23118671875,100.4 V110.80000000000001 H1340.63118671875 V103.00000000000001" fill="#fbfbf8" stroke="#c4a048" stroke-width="1.1"/><rect x="1341.43118671875" y="103.4" width="9.4" height="5.8" fill="#e3e9f4"/><ellipse cx="1342.93118671875" cy="106.2" rx="0.95" ry="2.1" fill="none" stroke="#2f4f90" stroke-width="1.1"/><rect x="1345.5311867187502" y="103.9" width="1.3" height="4.6" fill="#2f4f90"/><ellipse cx="1349.5311867187502" cy="106.2" rx="1.1" ry="2.3" fill="none" stroke="#3a5a9a" stroke-width="1.2"/><path d="M1341.73118671875,95.7 V100.9 Q1341.73118671875,102.2 1339.43118671875,102.2" fill="none" stroke="#2a6cb4" stroke-width="1.5"/>
<text transform="translate(1354.33,107.40) scale(0.86,1)" font-family="Liberation Sans" font-size="13.6" fill="#1a1a1a" stroke="#1a1a1a" stroke-width="0.5" letter-spacing="0.36">l47C.class</text>
<path d="M1415.16881328125,99.39999999999999 L1421.4688132812503,105.7 M1421.4688132812503,99.39999999999999 L1415.16881328125,105.7" stroke="#858578" stroke-width="3.3" stroke-linecap="round"/><path d="M1415.16881328125,99.39999999999999 L1421.4688132812503,105.7 M1421.4688132812503,99.39999999999999 L1415.16881328125,105.7" stroke="#ffffff" stroke-width="1.7" stroke-linecap="round"/>
<path d="M1474.4178757812501,96.60000000000001 H1478.81787578125 L1481.81787578125,100.4 V110.80000000000001 H1473.21787578125 V103.00000000000001" fill="#fbfbf8" stroke="#c4a048" stroke-width="1.1"/><rect x="1474.01787578125" y="103.4" width="9.4" height="5.8" fill="#e3e9f4"/><ellipse cx="1475.51787578125" cy="106.2" rx="0.95" ry="2.1" fill="none" stroke="#2f4f90" stroke-width="1.1"/><rect x="1478.1178757812502" y="103.9" width="1.3" height="4.6" fill="#2f4f90"/><ellipse cx="1482.1178757812502" cy="106.2" rx="1.1" ry="2.3" fill="none" stroke="#3a5a9a" stroke-width="1.2"/><path d="M1474.31787578125,95.7 V100.9 Q1474.31787578125,102.2 1472.01787578125,102.2" fill="none" stroke="#2a6cb4" stroke-width="1.5"/>
<text transform="translate(1486.92,107.40) scale(0.86,1)" font-family="Liberation Sans" font-size="13.6" fill="#1a1a1a" stroke="#1a1a1a" stroke-width="0.5" letter-spacing="0.36">r9xq$1.class</text>
<path d="M1560.08212421875,99.39999999999999 L1566.3821242187503,105.7 M1566.3821242187503,99.39999999999999 L1560.08212421875,105.7" stroke="#858578" stroke-width="3.3" stroke-linecap="round"/><path d="M1560.08212421875,99.39999999999999 L1566.3821242187503,105.7 M1566.3821242187503,99.39999999999999 L1560.08212421875,105.7" stroke="#ffffff" stroke-width="1.7" stroke-linecap="round"/>
<path d="M408.05956562499995,122.30000000000001 H412.459565625 L415.459565625,126.10000000000001 V136.5 H406.85956562499996 V128.70000000000002" fill="#fbfbf8" stroke="#c4a048" stroke-width="1.1"/><rect x="407.65956562499997" y="129.10000000000002" width="9.4" height="5.8" fill="#e3e9f4"/><ellipse cx="409.15956562499997" cy="131.9" rx="0.95" ry="2.1" fill="none" stroke="#2f4f90" stroke-width="1.1"/><rect x="411.75956562499994" y="129.60000000000002" width="1.3" height="4.6" fill="#2f4f90"/><ellipse cx="415.75956562499994" cy="131.9" rx="1.1" ry="2.3" fill="none" stroke="#3a5a9a" stroke-width="1.2"/><path d="M407.959565625,121.4 V126.60000000000001 Q407.959565625,127.9 405.65956562499997,127.9" fill="none" stroke="#2a6cb4" stroke-width="1.5"/>
<text transform="translate(420.56,133.10) scale(0.86,1)" font-family="Liberation Sans" font-size="13.6" fill="#1a1a1a" stroke="#1a1a1a" stroke-width="0.5" letter-spacing="0.36">J1Cl.class</text>
<path d="M480.74043437499995,125.1 L487.0404343749999,131.4 M487.0404343749999,125.1 L480.74043437499995,131.4" stroke="#858578" stroke-width="3.3" stroke-linecap="round"/><path d="M480.74043437499995,125.1 L487.0404343749999,131.4 M487.0404343749999,125.1 L480.74043437499995,131.4" stroke="#ffffff" stroke-width="1.7" stroke-linecap="round"/>
<path d="M544.7811867187501,122.30000000000001 H549.18118671875 L552.18118671875,126.10000000000001 V136.5 H543.58118671875 V128.70000000000002" fill="#fbfbf8" stroke="#c4a048" stroke-width="1.1"/><rect x="544.38118671875" y="129.10000000000002" width="9.4" height="5.8" fill="#e3e9f4"/><ellipse cx="545.88118671875" cy="131.9" rx="0.95" ry="2.1" fill="none" stroke="#2f4f90" stroke-width="1.1"/><rect x="548.48118671875" y="129.60000000000002" width="1.3" height="4.6" fill="#2f4f90"/><ellipse cx="552.48118671875" cy="131.9" rx="1.1" ry="2.3" fill="none" stroke="#3a5a9a" stroke-width="1.2"/><path d="M544.68118671875,121.4 V126.60000000000001 Q544.68118671875,127.9 542.38118671875,127.9" fill="none" stroke="#2a6cb4" stroke-width="1.5"/>
<text transform="translate(557.28,133.10) scale(0.86,1)" font-family="Liberation Sans" font-size="13.6" fill="#1a1a1a" stroke="#1a1a1a" stroke-width="0.5" letter-spacing="0.36">l47C.class</text>
<path d="M618.11881328125,125.1 L624.41881328125,131.4 M624.41881328125,125.1 L618.11881328125,131.4" stroke="#858578" stroke-width="3.3" stroke-linecap="round"/><path d="M618.11881328125,125.1 L624.41881328125,131.4 M624.41881328125,125.1 L618.11881328125,131.4" stroke="#ffffff" stroke-width="1.7" stroke-linecap="round"/>
<path d="M688.7777093750001,122.30000000000001 H693.1777093750001 L696.1777093750001,126.10000000000001 V136.5 H687.577709375 V128.70000000000002" fill="#fbfbf8" stroke="#c4a048" stroke-width="1.1"/><rect x="688.377709375" y="129.10000000000002" width="9.4" height="5.8" fill="#e3e9f4"/><ellipse cx="689.877709375" cy="131.9" rx="0.95" ry="2.1" fill="none" stroke="#2f4f90" stroke-width="1.1"/><rect x="692.477709375" y="129.60000000000002" width="1.3" height="4.6" fill="#2f4f90"/><ellipse cx="696.477709375" cy="131.9" rx="1.1" ry="2.3" fill="none" stroke="#3a5a9a" stroke-width="1.2"/><path d="M688.6777093750001,121.4 V126.60000000000001 Q688.6777093750001,127.9 686.377709375,127.9" fill="none" stroke="#2a6cb4" stroke-width="1.5"/>
<text transform="translate(701.28,133.10) scale(0.86,1)" font-family="Liberation Sans" font-size="13.6" fill="#1a1a1a" stroke="#1a1a1a" stroke-width="0.5" letter-spacing="0.36">H2zo$1$1.class</text>
<path d="M792.6222906250001,125.1 L798.9222906250001,131.4 M798.9222906250001,125.1 L792.6222906250001,131.4" stroke="#858578" stroke-width="3.3" stroke-linecap="round"/><path d="M792.6222906250001,125.1 L798.9222906250001,131.4 M798.9222906250001,125.1 L792.6222906250001,131.4" stroke="#ffffff" stroke-width="1.7" stroke-linecap="round"/>
<path d="M866.0920671875001,122.30000000000001 H870.4920671875001 L873.4920671875001,126.10000000000001 V136.5 H864.8920671875001 V128.70000000000002" fill="#fbfbf8" stroke="#c4a048" stroke-width="1.1"/><rect x="865.6920671875" y="129.10000000000002" width="9.4" height="5.8" fill="#e3e9f4"/><ellipse cx="867.1920671875" cy="131.9" rx="0.95" ry="2.1" fill="none" stroke="#2f4f90" stroke-width="1.1"/><rect x="869.7920671875" y="129.60000000000002" width="1.3" height="4.6" fill="#2f4f90"/><ellipse cx="873.7920671875" cy="131.9" rx="1.1" ry="2.3" fill="none" stroke="#3a5a9a" stroke-width="1.2"/><path d="M865.9920671875001,121.4 V126.60000000000001 Q865.9920671875001,127.9 863.6920671875,127.9" fill="none" stroke="#2a6cb4" stroke-width="1.5"/>
<text transform="translate(878.59,133.10) scale(0.86,1)" font-family="Liberation Sans" font-size="13.6" fill="#1a1a1a" stroke="#1a1a1a" stroke-width="0.5" letter-spacing="0.36">H2zo$1.class</text>
<path d="M956.3079328125001,125.1 L962.6079328125,131.4 M962.6079328125,125.1 L956.3079328125001,131.4" stroke="#858578" stroke-width="3.3" stroke-linecap="round"/><path d="M956.3079328125001,125.1 L962.6079328125,131.4 M962.6079328125,125.1 L956.3079328125001,131.4" stroke="#ffffff" stroke-width="1.7" stroke-linecap="round"/>
<path d="M1027.9420671875,122.30000000000001 H1032.3420671874999 L1035.3420671874999,126.10000000000001 V136.5 H1026.7420671875 V128.70000000000002" fill="#fbfbf8" stroke="#c4a048" stroke-width="1.1"/><rect x="1027.5420671875" y="129.10000000000002" width="9.4" height="5.8" fill="#e3e9f4"/><ellipse cx="1029.0420671875" cy="131.9" rx="0.95" ry="2.1" fill="none" stroke="#2f4f90" stroke-width="1.1"/><rect x="1031.6420671875" y="129.60000000000002" width="1.3" height="4.6" fill="#2f4f90"/><ellipse cx="1035.6420671875" cy="131.9" rx="1.1" ry="2.3" fill="none" stroke="#3a5a9a" stroke-width="1.2"/><path d="M1027.8420671874999,121.4 V126.60000000000001 Q1027.8420671874999,127.9 1025.5420671875,127.9" fill="none" stroke="#2a6cb4" stroke-width="1.5"/>
<text transform="translate(1040.44,133.10) scale(0.86,1)" font-family="Liberation Sans" font-size="13.6" fill="#1a1a1a" stroke="#1a1a1a" stroke-width="0.5" letter-spacing="0.36">H2zo$2.class</text>
<path d="M1118.1579328125,125.1 L1124.4579328125,131.4 M1124.4579328125,125.1 L1118.1579328125,131.4" stroke="#858578" stroke-width="3.3" stroke-linecap="round"/><path d="M1118.1579328125,125.1 L1124.4579328125,131.4 M1124.4579328125,125.1 L1118.1579328125,131.4" stroke="#ffffff" stroke-width="1.7" stroke-linecap="round"/>
<path d="M1187.6064250000002,122.30000000000001 H1192.006425 L1195.006425,126.10000000000001 V136.5 H1186.4064250000001 V128.70000000000002" fill="#fbfbf8" stroke="#c4a048" stroke-width="1.1"/><rect x="1187.206425" y="129.10000000000002" width="9.4" height="5.8" fill="#e3e9f4"/><ellipse cx="1188.706425" cy="131.9" rx="0.95" ry="2.1" fill="none" stroke="#2f4f90" stroke-width="1.1"/><rect x="1191.3064250000002" y="129.60000000000002" width="1.3" height="4.6" fill="#2f4f90"/><ellipse cx="1195.3064250000002" cy="131.9" rx="1.1" ry="2.3" fill="none" stroke="#3a5a9a" stroke-width="1.2"/><path d="M1187.506425,121.4 V126.60000000000001 Q1187.506425,127.9 1185.206425,127.9" fill="none" stroke="#2a6cb4" stroke-width="1.5"/>
<text transform="translate(1200.11,133.10) scale(0.86,1)" font-family="Liberation Sans" font-size="13.6" fill="#1a1a1a" stroke="#1a1a1a" stroke-width="0.5" letter-spacing="0.36">H2zo.class</text>
<path d="M1264.193575,125.1 L1270.4935750000002,131.4 M1270.4935750000002,125.1 L1264.193575,131.4" stroke="#858578" stroke-width="3.3" stroke-linecap="round"/><path d="M1264.193575,125.1 L1270.4935750000002,131.4 M1270.4935750000002,125.1 L1264.193575,131.4" stroke="#ffffff" stroke-width="1.7" stroke-linecap="round"/>
<path d="M1331.9180734375002,122.30000000000001 H1336.3180734375 L1339.3180734375,126.10000000000001 V136.5 H1330.7180734375002 V128.70000000000002" fill="#fbfbf8" stroke="#c4a048" stroke-width="1.1"/><rect x="1331.5180734375" y="129.10000000000002" width="9.4" height="5.8" fill="#e3e9f4"/><ellipse cx="1333.0180734375" cy="131.9" rx="0.95" ry="2.1" fill="none" stroke="#2f4f90" stroke-width="1.1"/><rect x="1335.6180734375002" y="129.60000000000002" width="1.3" height="4.6" fill="#2f4f90"/><ellipse cx="1339.6180734375002" cy="131.9" rx="1.1" ry="2.3" fill="none" stroke="#3a5a9a" stroke-width="1.2"/><path d="M1331.8180734375,121.4 V126.60000000000001 Q1331.8180734375,127.9 1329.5180734375,127.9" fill="none" stroke="#2a6cb4" stroke-width="1.5"/>
<text transform="translate(1344.42,133.10) scale(0.86,1)" font-family="Liberation Sans" font-size="13.6" fill="#1a1a1a" stroke="#1a1a1a" stroke-width="0.5" letter-spacing="0.36">I0Dv.class</text>
<path d="M1404.3819265625002,125.1 L1410.6819265625004,131.4 M1410.6819265625004,125.1 L1404.3819265625002,131.4" stroke="#858578" stroke-width="3.3" stroke-linecap="round"/><path d="M1404.3819265625002,125.1 L1410.6819265625004,131.4 M1410.6819265625004,125.1 L1404.3819265625002,131.4" stroke="#ffffff" stroke-width="1.7" stroke-linecap="round"/>
<path d="M1472.891590625,122.30000000000001 H1477.2915906249998 L1480.2915906249998,126.10000000000001 V136.5 H1471.691590625 V128.70000000000002" fill="#fbfbf8" stroke="#c4a048" stroke-width="1.1"/><rect x="1472.4915906249998" y="129.10000000000002" width="9.4" height="5.8" fill="#e3e9f4"/><ellipse cx="1473.9915906249998" cy="131.9" rx="0.95" ry="2.1" fill="none" stroke="#2f4f90" stroke-width="1.1"/><rect x="1476.591590625" y="129.60000000000002" width="1.3" height="4.6" fill="#2f4f90"/><ellipse cx="1480.591590625" cy="131.9" rx="1.1" ry="2.3" fill="none" stroke="#3a5a9a" stroke-width="1.2"/><path d="M1472.7915906249998,121.4 V126.60000000000001 Q1472.7915906249998,127.9 1470.4915906249998,127.9" fill="none" stroke="#2a6cb4" stroke-width="1.5"/>
<text transform="translate(1485.39,133.10) scale(0.86,1)" font-family="Liberation Sans" font-size="13.6" fill="#1a1a1a" stroke="#1a1a1a" stroke-width="0.5" letter-spacing="0.36">I9fV$1.class</text>
<path d="M1556.6084093749998,125.1 L1562.908409375,131.4 M1562.908409375,125.1 L1556.6084093749998,131.4" stroke="#858578" stroke-width="3.3" stroke-linecap="round"/><path d="M1556.6084093749998,125.1 L1562.908409375,131.4 M1562.908409375,125.1 L1556.6084093749998,131.4" stroke="#ffffff" stroke-width="1.7" stroke-linecap="round"/>
<path d="M402.90566328125,148.0 H407.30566328125 L410.30566328125,151.8 V162.2 H401.70566328125 V154.4" fill="#fbfbf8" stroke="#c4a048" stroke-width="1.1"/><rect x="402.50566328125" y="154.8" width="9.4" height="5.8" fill="#e3e9f4"/><ellipse cx="404.00566328125" cy="157.6" rx="0.95" ry="2.1" fill="none" stroke="#2f4f90" stroke-width="1.1"/><rect x="406.60566328125" y="155.3" width="1.3" height="4.6" fill="#2f4f90"/><ellipse cx="410.60566328125" cy="157.6" rx="1.1" ry="2.3" fill="none" stroke="#3a5a9a" stroke-width="1.2"/><path d="M402.80566328125,147.1 V152.3 Q402.80566328125,153.6 400.50566328125,153.6" fill="none" stroke="#2a6cb4" stroke-width="1.5"/>
<text transform="translate(415.41,158.80) scale(0.86,1)" font-family="Liberation Sans" font-size="13.6" fill="#1a1a1a" stroke="#1a1a1a" stroke-width="0.5" letter-spacing="0.36">L6zT.class</text>
<path d="M476.89433671875,150.79999999999998 L483.19433671875,157.1 M483.19433671875,150.79999999999998 L476.89433671875,157.1" stroke="#858578" stroke-width="3.3" stroke-linecap="round"/><path d="M476.89433671875,150.79999999999998 L483.19433671875,157.1 M483.19433671875,150.79999999999998 L476.89433671875,157.1" stroke="#ffffff" stroke-width="1.7" stroke-linecap="round"/>
<path d="M529.191590625,148.0 H533.591590625 L536.591590625,151.8 V162.2 H527.991590625 V154.4" fill="#fbfbf8" stroke="#c4a048" stroke-width="1.1"/><rect x="528.7915906249999" y="154.8" width="9.4" height="5.8" fill="#e3e9f4"/><ellipse cx="530.2915906249999" cy="157.6" rx="0.95" ry="2.1" fill="none" stroke="#2f4f90" stroke-width="1.1"/><rect x="532.8915906249999" y="155.3" width="1.3" height="4.6" fill="#2f4f90"/><ellipse cx="536.8915906249999" cy="157.6" rx="1.1" ry="2.3" fill="none" stroke="#3a5a9a" stroke-width="1.2"/><path d="M529.091590625,147.1 V152.3 Q529.091590625,153.6 526.7915906249999,153.6" fill="none" stroke="#2a6cb4" stroke-width="1.5"/>
<text transform="translate(541.69,158.80) scale(0.86,1)" font-family="Liberation Sans" font-size="13.6" fill="#1a1a1a" stroke="#1a1a1a" stroke-width="0.5" letter-spacing="0.36">I9fV$1.class</text>
<path d="M612.908409375,150.79999999999998 L619.208409375,157.1 M619.208409375,150.79999999999998 L612.908409375,157.1" stroke="#858578" stroke-width="3.3" stroke-linecap="round"/><path d="M612.908409375,150.79999999999998 L619.208409375,157.1 M619.208409375,150.79999999999998 L612.908409375,157.1" stroke="#ffffff" stroke-width="1.7" stroke-linecap="round"/>
<path d="M665.741590625,148.0 H670.1415906249999 L673.1415906249999,151.8 V162.2 H664.5415906249999 V154.4" fill="#fbfbf8" stroke="#c4a048" stroke-width="1.1"/><rect x="665.3415906249999" y="154.8" width="9.4" height="5.8" fill="#e3e9f4"/><ellipse cx="666.8415906249999" cy="157.6" rx="0.95" ry="2.1" fill="none" stroke="#2f4f90" stroke-width="1.1"/><rect x="669.4415906249999" y="155.3" width="1.3" height="4.6" fill="#2f4f90"/><ellipse cx="673.4415906249999" cy="157.6" rx="1.1" ry="2.3" fill="none" stroke="#3a5a9a" stroke-width="1.2"/><path d="M665.6415906249999,147.1 V152.3 Q665.6415906249999,153.6 663.3415906249999,153.6" fill="none" stroke="#2a6cb4" stroke-width="1.5"/>
<text transform="translate(678.24,158.80) scale(0.86,1)" font-family="Liberation Sans" font-size="13.6" fill="#1a1a1a" stroke="#1a1a1a" stroke-width="0.5" letter-spacing="0.36">I9fV$2.class</text>
<path d="M749.458409375,150.79999999999998 L755.7584093749999,157.1 M755.7584093749999,150.79999999999998 L749.458409375,157.1" stroke="#858578" stroke-width="3.3" stroke-linecap="round"/><path d="M749.458409375,150.79999999999998 L755.7584093749999,157.1 M755.7584093749999,150.79999999999998 L749.458409375,157.1" stroke="#ffffff" stroke-width="1.7" stroke-linecap="round"/>
<path d="M802.291590625,148.0 H806.691590625 L809.691590625,151.8 V162.2 H801.091590625 V154.4" fill="#fbfbf8" stroke="#c4a048" stroke-width="1.1"/><rect x="801.8915906249999" y="154.8" width="9.4" height="5.8" fill="#e3e9f4"/><ellipse cx="803.3915906249999" cy="157.6" rx="0.95" ry="2.1" fill="none" stroke="#2f4f90" stroke-width="1.1"/><rect x="805.991590625" y="155.3" width="1.3" height="4.6" fill="#2f4f90"/><ellipse cx="809.991590625" cy="157.6" rx="1.1" ry="2.3" fill="none" stroke="#3a5a9a" stroke-width="1.2"/><path d="M802.191590625,147.1 V152.3 Q802.191590625,153.6 799.8915906249999,153.6" fill="none" stroke="#2a6cb4" stroke-width="1.5"/>
<text transform="translate(814.79,158.80) scale(0.86,1)" font-family="Liberation Sans" font-size="13.6" fill="#1a1a1a" stroke="#1a1a1a" stroke-width="0.5" letter-spacing="0.36">I9fV$3.class</text>
<path d="M886.008409375,150.79999999999998 L892.308409375,157.1 M892.308409375,150.79999999999998 L886.008409375,157.1" stroke="#858578" stroke-width="3.3" stroke-linecap="round"/><path d="M886.008409375,150.79999999999998 L892.308409375,157.1 M892.308409375,150.79999999999998 L886.008409375,157.1" stroke="#ffffff" stroke-width="1.7" stroke-linecap="round"/>
<path d="M938.991590625,148.0 H943.3915906249999 L946.3915906249999,151.8 V162.2 H937.7915906249999 V154.4" fill="#fbfbf8" stroke="#c4a048" stroke-width="1.1"/><rect x="938.5915906249999" y="154.8" width="9.4" height="5.8" fill="#e3e9f4"/><ellipse cx="940.0915906249999" cy="157.6" rx="0.95" ry="2.1" fill="none" stroke="#2f4f90" stroke-width="1.1"/><rect x="942.6915906249999" y="155.3" width="1.3" height="4.6" fill="#2f4f90"/><ellipse cx="946.6915906249999" cy="157.6" rx="1.1" ry="2.3" fill="none" stroke="#3a5a9a" stroke-width="1.2"/><path d="M938.8915906249999,147.1 V152.3 Q938.8915906249999,153.6 936.5915906249999,153.6" fill="none" stroke="#2a6cb4" stroke-width="1.5"/>
<text transform="translate(951.49,158.80) scale(0.86,1)" font-family="Liberation Sans" font-size="13.6" fill="#1a1a1a" stroke="#1a1a1a" stroke-width="0.5" letter-spacing="0.36">I9fV$4.class</text>
<path d="M1022.708409375,150.79999999999998 L1029.0084093750002,157.1 M1029.0084093750002,150.79999999999998 L1022.708409375,157.1" stroke="#858578" stroke-width="3.3" stroke-linecap="round"/><path d="M1022.708409375,150.79999999999998 L1029.0084093750002,157.1 M1029.0084093750002,150.79999999999998 L1022.708409375,157.1" stroke="#ffffff" stroke-width="1.7" stroke-linecap="round"/>
<path d="M1075.6915906250001,148.0 H1080.091590625 L1083.091590625,151.8 V162.2 H1074.491590625 V154.4" fill="#fbfbf8" stroke="#c4a048" stroke-width="1.1"/><rect x="1075.291590625" y="154.8" width="9.4" height="5.8" fill="#e3e9f4"/><ellipse cx="1076.791590625" cy="157.6" rx="0.95" ry="2.1" fill="none" stroke="#2f4f90" stroke-width="1.1"/><rect x="1079.3915906250002" y="155.3" width="1.3" height="4.6" fill="#2f4f90"/><ellipse cx="1083.3915906250002" cy="157.6" rx="1.1" ry="2.3" fill="none" stroke="#3a5a9a" stroke-width="1.2"/><path d="M1075.591590625,147.1 V152.3 Q1075.591590625,153.6 1073.291590625,153.6" fill="none" stroke="#2a6cb4" stroke-width="1.5"/>
<text transform="translate(1088.19,158.80) scale(0.86,1)" font-family="Liberation Sans" font-size="13.6" fill="#1a1a1a" stroke="#1a1a1a" stroke-width="0.5" letter-spacing="0.36">I9fV$5.class</text>
<path d="M1159.408409375,150.79999999999998 L1165.7084093750002,157.1 M1165.7084093750002,150.79999999999998 L1159.408409375,157.1" stroke="#858578" stroke-width="3.3" stroke-linecap="round"/><path d="M1159.408409375,150.79999999999998 L1165.7084093750002,157.1 M1165.7084093750002,150.79999999999998 L1159.408409375,157.1" stroke="#ffffff" stroke-width="1.7" stroke-linecap="round"/>
<path d="M1211.3927765625,148.0 H1215.7927765625 L1218.7927765625,151.8 V162.2 H1210.1927765625 V154.4" fill="#fbfbf8" stroke="#c4a048" stroke-width="1.1"/><rect x="1210.9927765625" y="154.8" width="9.4" height="5.8" fill="#e3e9f4"/><ellipse cx="1212.4927765625" cy="157.6" rx="0.95" ry="2.1" fill="none" stroke="#2f4f90" stroke-width="1.1"/><rect x="1215.0927765625001" y="155.3" width="1.3" height="4.6" fill="#2f4f90"/><ellipse cx="1219.0927765625001" cy="157.6" rx="1.1" ry="2.3" fill="none" stroke="#3a5a9a" stroke-width="1.2"/><path d="M1211.2927765625,147.1 V152.3 Q1211.2927765625,153.6 1208.9927765625,153.6" fill="none" stroke="#2a6cb4" stroke-width="1.5"/>
<text transform="translate(1223.89,158.80) scale(0.86,1)" font-family="Liberation Sans" font-size="13.6" fill="#1a1a1a" stroke="#1a1a1a" stroke-width="0.5" letter-spacing="0.36">I9fV.class</text>
<path d="M1280.4072234375,150.79999999999998 L1286.7072234375003,157.1 M1286.7072234375003,150.79999999999998 L1280.4072234375,157.1" stroke="#858578" stroke-width="3.3" stroke-linecap="round"/><path d="M1280.4072234375,150.79999999999998 L1286.7072234375003,157.1 M1286.7072234375003,150.79999999999998 L1280.4072234375,157.1" stroke="#ffffff" stroke-width="1.7" stroke-linecap="round"/>
<path d="M1331.75566328125,148.0 H1336.1556632812499 L1339.1556632812499,151.8 V162.2 H1330.55566328125 V154.4" fill="#fbfbf8" stroke="#c4a048" stroke-width="1.1"/><rect x="1331.35566328125" y="154.8" width="9.4" height="5.8" fill="#e3e9f4"/><ellipse cx="1332.85566328125" cy="157.6" rx="0.95" ry="2.1" fill="none" stroke="#2f4f90" stroke-width="1.1"/><rect x="1335.45566328125" y="155.3" width="1.3" height="4.6" fill="#2f4f90"/><ellipse cx="1339.45566328125" cy="157.6" rx="1.1" ry="2.3" fill="none" stroke="#3a5a9a" stroke-width="1.2"/><path d="M1331.6556632812499,147.1 V152.3 Q1331.6556632812499,153.6 1329.35566328125,153.6" fill="none" stroke="#2a6cb4" stroke-width="1.5"/>
<text transform="translate(1344.26,158.80) scale(0.86,1)" font-family="Liberation Sans" font-size="13.6" fill="#1a1a1a" stroke="#1a1a1a" stroke-width="0.5" letter-spacing="0.36">L6zT.class</text>
<path d="M1405.74433671875,150.79999999999998 L1412.0443367187502,157.1 M1412.0443367187502,150.79999999999998 L1405.74433671875,157.1" stroke="#858578" stroke-width="3.3" stroke-linecap="round"/><path d="M1405.74433671875,150.79999999999998 L1412.0443367187502,157.1 M1412.0443367187502,150.79999999999998 L1405.74433671875,157.1" stroke="#ffffff" stroke-width="1.7" stroke-linecap="round"/>
<path d="M1459.82681171875,148.0 H1464.2268117187498 L1467.2268117187498,151.8 V162.2 H1458.6268117187499 V154.4" fill="#fbfbf8" stroke="#c4a048" stroke-width="1.1"/><rect x="1459.4268117187498" y="154.8" width="9.4" height="5.8" fill="#e3e9f4"/><ellipse cx="1460.9268117187498" cy="157.6" rx="0.95" ry="2.1" fill="none" stroke="#2f4f90" stroke-width="1.1"/><rect x="1463.52681171875" y="155.3" width="1.3" height="4.6" fill="#2f4f90"/><ellipse cx="1467.52681171875" cy="157.6" rx="1.1" ry="2.3" fill="none" stroke="#3a5a9a" stroke-width="1.2"/><path d="M1459.7268117187498,147.1 V152.3 Q1459.7268117187498,153.6 1457.4268117187498,153.6" fill="none" stroke="#2a6cb4" stroke-width="1.5"/>
<text transform="translate(1472.33,158.80) scale(0.86,1)" font-family="Liberation Sans" font-size="13.6" fill="#1a1a1a" stroke="#1a1a1a" stroke-width="0.5" letter-spacing="0.36">I9fV$L6zT.class</text>
<path d="M1562.6731882812498,150.79999999999998 L1568.97318828125,157.1 M1568.97318828125,150.79999999999998 L1562.6731882812498,157.1" stroke="#858578" stroke-width="3.3" stroke-linecap="round"/><path d="M1562.6731882812498,150.79999999999998 L1568.97318828125,157.1 M1568.97318828125,150.79999999999998 L1562.6731882812498,157.1" stroke="#ffffff" stroke-width="1.7" stroke-linecap="round"/>
</svg>
</body></html>
